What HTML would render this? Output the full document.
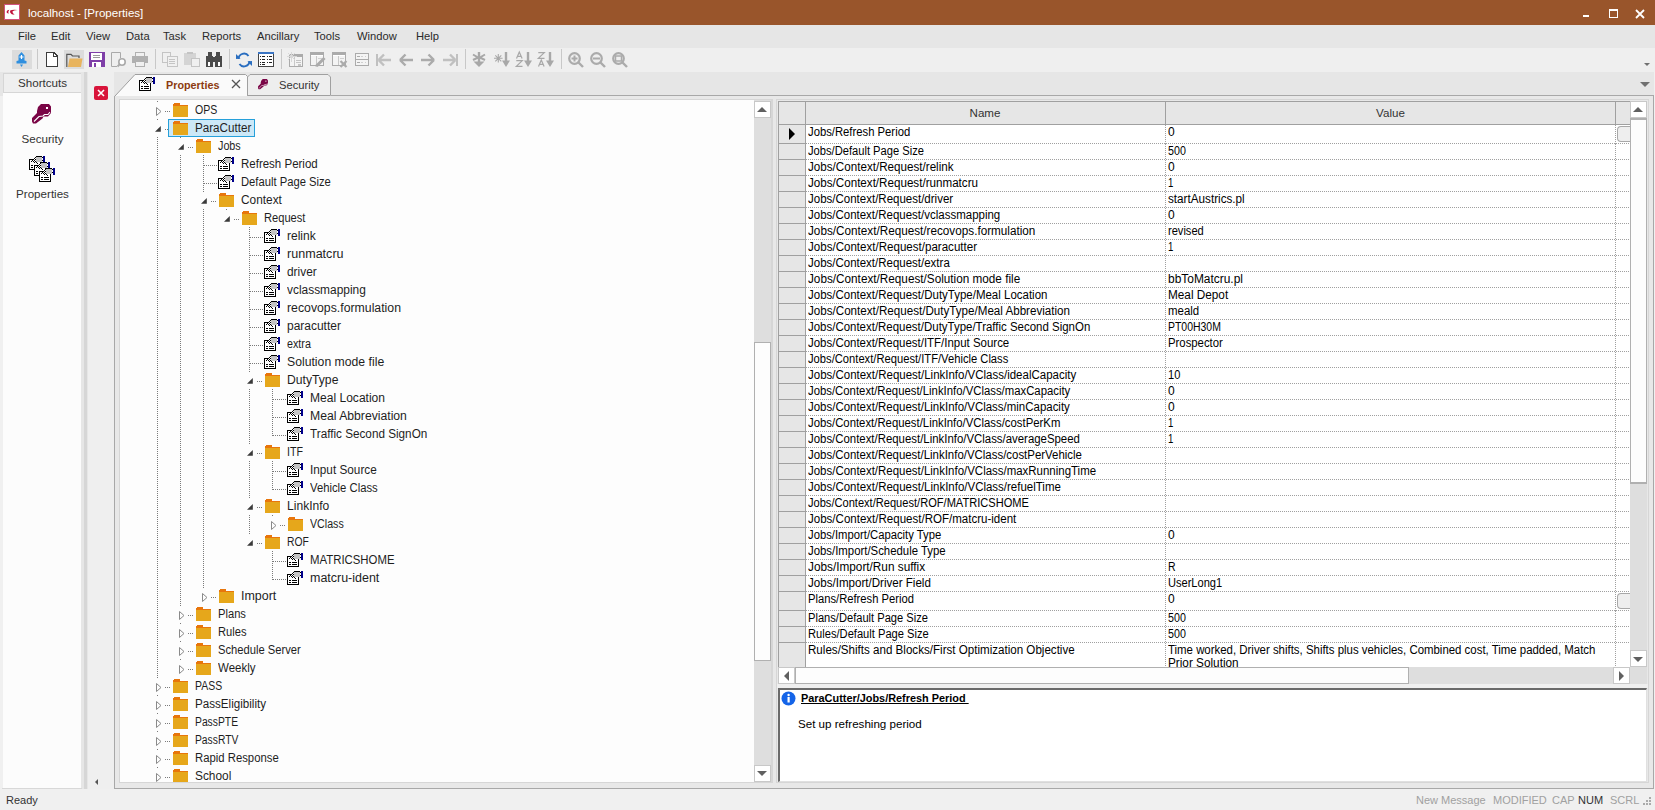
<!DOCTYPE html>
<html><head><meta charset="utf-8"><style>
html,body{margin:0;padding:0;width:1655px;height:810px;overflow:hidden;background:#f0f0f0;font-family:"Liberation Sans", sans-serif;}
</style></head><body>
<svg width="0" height="0" style="position:absolute"><defs><pattern id="ck" width="2" height="2" patternUnits="userSpaceOnUse"><rect width="2" height="2" fill="#fff"/><rect width="1" height="1" fill="#000"/><rect x="1" y="1" width="1" height="1" fill="#000"/></pattern></defs></svg>
<div style="position:absolute;left:0px;top:0px;width:1655px;height:25px;background:#99552b"></div>
<div style="position:absolute;left:4px;top:4px;width:16px;height:16px;background:#fff;border:1px solid #d2517c;box-sizing:border-box"></div>
<svg style="position:absolute;left:0px;top:0px;" width="22" height="22" viewBox="0 0 22 22"><path d="M9.3 9.8 Q6.6 10.3 6.5 12 Q6.8 13.6 8.8 13.4 Q7.6 12 9.3 9.8Z" fill="#c0103a"/><path d="M10.2 10.6 Q12.5 9.2 17.5 10 Q13.4 10.3 12.4 11.6 Q12.3 13 14.6 14.8 Q11.2 14.6 10.3 12.8 Q9.9 11.4 10.2 10.6Z" fill="#c0103a"/></svg>
<div style="position:absolute;left:28px;top:5px;height:16px;line-height:16px;white-space:nowrap;color:#fff;font-size:11.6px">localhost - [Properties]</div>
<div style="position:absolute;left:1583px;top:15px;width:6px;height:2px;background:#fff"></div>
<div style="position:absolute;left:1609px;top:9px;width:9px;height:9px;border:1px solid #fff;border-top-width:2px;box-sizing:border-box"></div>
<svg style="position:absolute;left:1635px;top:9px;" width="10" height="10" viewBox="0 0 10 10"><path d="M1 1L9 9M9 1L1 9" stroke="#fff" stroke-width="1.8"/></svg>
<div style="position:absolute;left:0px;top:25px;width:1655px;height:23px;background:#e6e6e6"></div>
<div style="position:absolute;left:18px;top:28px;height:16px;line-height:16px;white-space:nowrap;color:#2a2a2a;font-size:11.2px">File</div>
<div style="position:absolute;left:51px;top:28px;height:16px;line-height:16px;white-space:nowrap;color:#2a2a2a;font-size:11.2px">Edit</div>
<div style="position:absolute;left:86px;top:28px;height:16px;line-height:16px;white-space:nowrap;color:#2a2a2a;font-size:11.2px">View</div>
<div style="position:absolute;left:126px;top:28px;height:16px;line-height:16px;white-space:nowrap;color:#2a2a2a;font-size:11.2px">Data</div>
<div style="position:absolute;left:163px;top:28px;height:16px;line-height:16px;white-space:nowrap;color:#2a2a2a;font-size:11.2px">Task</div>
<div style="position:absolute;left:202px;top:28px;height:16px;line-height:16px;white-space:nowrap;color:#2a2a2a;font-size:11.2px">Reports</div>
<div style="position:absolute;left:257px;top:28px;height:16px;line-height:16px;white-space:nowrap;color:#2a2a2a;font-size:11.2px">Ancillary</div>
<div style="position:absolute;left:314px;top:28px;height:16px;line-height:16px;white-space:nowrap;color:#2a2a2a;font-size:11.2px">Tools</div>
<div style="position:absolute;left:357px;top:28px;height:16px;line-height:16px;white-space:nowrap;color:#2a2a2a;font-size:11.2px">Window</div>
<div style="position:absolute;left:416px;top:28px;height:16px;line-height:16px;white-space:nowrap;color:#2a2a2a;font-size:11.2px">Help</div>
<div style="position:absolute;left:0px;top:48px;width:1655px;height:24px;background:#efefef"></div>
<div style="position:absolute;left:1644px;top:63px;width:0px;height:0px;border-left:3px solid transparent;border-right:3px solid transparent;border-top:3px solid #707070"></div>
<div style="position:absolute;left:12px;top:50px;width:20px;height:19px;background:#dcdcdc"></div>
<div style="position:absolute;left:64px;top:50px;width:20px;height:19px;background:#dcdcdc"></div>
<div style="position:absolute;left:37px;top:49px;width:1px;height:20px;background:#c8c8c8"></div>
<div style="position:absolute;left:155px;top:49px;width:1px;height:20px;background:#c8c8c8"></div>
<div style="position:absolute;left:229px;top:49px;width:1px;height:20px;background:#c8c8c8"></div>
<div style="position:absolute;left:281px;top:49px;width:1px;height:20px;background:#c8c8c8"></div>
<div style="position:absolute;left:465px;top:49px;width:1px;height:20px;background:#c8c8c8"></div>
<div style="position:absolute;left:561px;top:49px;width:1px;height:20px;background:#c8c8c8"></div>
<svg style="position:absolute;left:14px;top:51px;" width="16" height="17" viewBox="0 0 16 17"><path d="M7.5 1 L10.5 4.5 L10.5 9.5 L12.5 10 L12.5 12.5 L2.5 12.5 L2.5 10 L4.5 9.5 L4.5 4.5 Z" fill="#2f8fdf"/><path d="M6 13.5 L9 13.5 L7.5 16 Z" fill="#2f8fdf"/><path d="M7.5 4 L7.5 8 M5.5 6 L9.5 6" stroke="#fff" stroke-width="1.2"/></svg>
<svg style="position:absolute;left:46px;top:52px;" width="12" height="16" viewBox="0 0 12 16" shape-rendering="crispEdges"><path d="M0.5 0.5 L8 0.5 L11.5 4 L11.5 14.5 L0.5 14.5 Z" fill="#fff" stroke="#3c3c3c"/><path d="M7.5 0.5 L7.5 4.5 L11.5 4.5" fill="none" stroke="#3c3c3c"/></svg>
<svg style="position:absolute;left:66px;top:53px;" width="18" height="15" viewBox="0 0 18 15"><path d="M0.8 14 L0.8 1.3 L5 1.3 L6.5 3 L13 3 L13 5" fill="none" stroke="#555" stroke-width="1.2"/><path d="M2 14 L3.5 5.5 L16.5 5.5 L15 14 Z" fill="#e8b45e"/></svg>
<svg style="position:absolute;left:89px;top:52px;" width="16" height="16" viewBox="0 0 16 16" shape-rendering="crispEdges"><rect x="0" y="0" width="16" height="15" fill="#7f3fa8"/><rect x="2" y="1" width="11" height="7" fill="#fff"/><rect x="4" y="3" width="7" height="1" fill="#999"/><rect x="4" y="5" width="7" height="1" fill="#999"/><rect x="3" y="10" width="9" height="5" fill="#fff"/><rect x="5" y="11" width="2" height="4" fill="#7f3fa8"/></svg>
<svg style="position:absolute;left:111px;top:52px;" width="16" height="16" viewBox="0 0 16 16"><path d="M0.5 14.5 L0.5 0.5 L9.5 0.5 L9.5 6" fill="none" stroke="#aaa" stroke-width="1"/><path d="M0.5 14.5 L6 14.5" stroke="#aaa"/><circle cx="11" cy="10" r="3.2" fill="#fff" stroke="#aaa" stroke-width="1.6"/><path d="M8.5 12.5 L6.5 14.5" stroke="#aaa" stroke-width="1.8"/></svg>
<svg style="position:absolute;left:132px;top:52px;" width="16" height="16" viewBox="0 0 16 16" shape-rendering="crispEdges"><rect x="3" y="0" width="10" height="4" fill="#b0b0b0"/><rect x="4" y="1" width="8" height="3" fill="#f0f0f0"/><rect x="0" y="4" width="16" height="7" fill="#b0b0b0"/><rect x="3" y="9" width="10" height="6" fill="#b0b0b0"/><rect x="4" y="10" width="8" height="4" fill="#f0f0f0"/></svg>
<svg style="position:absolute;left:162px;top:52px;" width="16" height="16" viewBox="0 0 16 16" shape-rendering="crispEdges"><rect x="0.5" y="0.5" width="8" height="10" fill="#f0f0f0" stroke="#c4c4c4"/><rect x="5.5" y="4.5" width="10" height="10" fill="#f0f0f0" stroke="#c4c4c4"/><rect x="7" y="7" width="6" height="1" fill="#c4c4c4"/><rect x="7" y="9" width="6" height="1" fill="#c4c4c4"/><rect x="7" y="11" width="6" height="1" fill="#c4c4c4"/></svg>
<svg style="position:absolute;left:184px;top:52px;" width="16" height="16" viewBox="0 0 16 16" shape-rendering="crispEdges"><rect x="0" y="1" width="12" height="12" fill="#d4d4d4"/><rect x="3" y="0" width="6" height="2" fill="#c4c4c4"/><rect x="7.5" y="6.5" width="8" height="8" fill="#f0f0f0" stroke="#c4c4c4"/></svg>
<svg style="position:absolute;left:206px;top:52px;" width="16" height="16" viewBox="0 0 16 16" shape-rendering="crispEdges"><rect x="2" y="0" width="4" height="4" fill="#4a4a4a"/><rect x="10" y="0" width="4" height="4" fill="#4a4a4a"/><rect x="0" y="4" width="7" height="11" fill="#4a4a4a"/><rect x="9" y="4" width="7" height="11" fill="#4a4a4a"/><rect x="6" y="5" width="4" height="5" fill="#4a4a4a"/><rect x="2" y="10" width="2" height="4" fill="#fff"/><rect x="12" y="10" width="2" height="4" fill="#fff"/></svg>
<svg style="position:absolute;left:236px;top:52px;" width="16" height="16" viewBox="0 0 16 16"><path d="M2.5 7 A5.5 5.5 0 0 1 12.5 4" fill="none" stroke="#2a6ec0" stroke-width="2"/><path d="M13.5 9 A5.5 5.5 0 0 1 3.5 12" fill="none" stroke="#2a6ec0" stroke-width="2"/><path d="M0 2 L4.5 6.5 L0 7Z" fill="#2a6ec0"/><path d="M16 14 L11.5 9.5 L16 9Z" fill="#2a6ec0"/></svg>
<svg style="position:absolute;left:258px;top:52px;" width="16" height="16" viewBox="0 0 16 16" shape-rendering="crispEdges"><rect x="0.5" y="0.5" width="15" height="14" fill="#fff" stroke="#444"/><rect x="0" y="0" width="16" height="2" fill="#3a75c4"/><rect x="2" y="4" width="1" height="1" fill="#222"/><rect x="4" y="4" width="3" height="1" fill="#222"/><rect x="9" y="4" width="1" height="1" fill="#222"/><rect x="11" y="4" width="3" height="1" fill="#222"/><rect x="2" y="7" width="1" height="1" fill="#222"/><rect x="4" y="7" width="3" height="1" fill="#222"/><rect x="9" y="7" width="1" height="1" fill="#222"/><rect x="11" y="7" width="3" height="1" fill="#222"/><rect x="2" y="10" width="1" height="1" fill="#222"/><rect x="4" y="10" width="3" height="1" fill="#222"/><rect x="9" y="10" width="1" height="1" fill="#222"/><rect x="11" y="10" width="3" height="1" fill="#222"/><rect x="2" y="12" width="1" height="1" fill="#222"/><rect x="4" y="12" width="3" height="1" fill="#222"/></svg>
<svg style="position:absolute;left:283px;top:48px;" width="90" height="24" viewBox="0 0 90 24" shape-rendering="crispEdges"><rect x="6.5" y="6.5" width="13" height="12" fill="#f4f4f4" stroke="#ababab"/><rect x="6" y="6" width="14" height="3" fill="#ababab"/><rect x="11" y="9" width="1" height="9" fill="#c8c8c8"/><rect x="13" y="12" width="5" height="1" fill="#c4c4c4"/><rect x="13" y="14" width="5" height="1" fill="#c4c4c4"/><rect x="15" y="16" width="3" height="2" fill="#c4c4c4"/><circle cx="8.5" cy="8.5" r="2" fill="#d4d4d4"/><path d="M8.5 3.5 L8.5 13.5 M3.5 8.5 L13.5 8.5 M5 5 L12 12 M12 5 L5 12" stroke="#d8d8d8" stroke-width="1"/><rect x="27.5" y="4.5" width="13" height="13" fill="#f4f4f4" stroke="#ababab"/><rect x="27" y="4" width="14" height="3" fill="#ababab"/><rect x="28" y="7" width="12" height="1" fill="#fff"/><rect x="33" y="8" width="1" height="9" fill="#c8c8c8"/><rect x="35" y="10" width="4" height="1" fill="#d0d0d0"/><rect x="49.5" y="4.5" width="13" height="13" fill="#f4f4f4" stroke="#ababab"/><rect x="49" y="4" width="14" height="3" fill="#ababab"/><rect x="50" y="7" width="12" height="1" fill="#fff"/><rect x="55" y="8" width="1" height="9" fill="#c8c8c8"/><rect x="57" y="10" width="4" height="1" fill="#d0d0d0"/><rect x="72.5" y="5.5" width="13" height="12" fill="#f4f4f4" stroke="#ababab"/><rect x="72" y="11" width="14" height="1" fill="#ababab"/><rect x="74" y="8" width="3" height="1" fill="#ababab"/><rect x="78" y="8" width="2" height="1" fill="#d0d0d0"/><rect x="82" y="8" width="1" height="1" fill="#d0d0d0"/><rect x="74" y="14" width="3" height="1" fill="#ababab"/><rect x="78" y="14" width="2" height="1" fill="#d0d0d0"/><rect x="82" y="14" width="1" height="1" fill="#d0d0d0"/></svg>
<svg style="position:absolute;left:283px;top:48px;" width="90" height="24" viewBox="0 0 90 24"><path d="M33.5 18 L41.5 10" stroke="#ababab" stroke-width="3"/><path d="M32.5 19 L33 17.5 L34 18.5Z" fill="#ababab"/><path d="M57.5 13 L63.5 19 M63.5 13 L57.5 19" stroke="#ababab" stroke-width="2.2"/></svg>
<svg style="position:absolute;left:376px;top:53px;" width="16" height="14" viewBox="0 0 16 14"><rect x="0" y="1" width="2" height="12" fill="#c0c0c0"/><path d="M2.5 7 L8 1.5 M2.5 7 L8 12.5 M3 7 L15 7" stroke="#c0c0c0" stroke-width="2.4"/></svg>
<svg style="position:absolute;left:399px;top:53px;" width="15" height="14" viewBox="0 0 15 14"><path d="M1 7 L6.5 1.5 M1 7 L6.5 12.5 M1.5 7 L14 7" stroke="#ababab" stroke-width="2.4"/></svg>
<svg style="position:absolute;left:420px;top:53px;" width="15" height="14" viewBox="0 0 15 14"><path d="M14 7 L8.5 1.5 M14 7 L8.5 12.5 M13.5 7 L1 7" stroke="#ababab" stroke-width="2.4"/></svg>
<svg style="position:absolute;left:442px;top:53px;" width="16" height="14" viewBox="0 0 16 14"><rect x="14" y="1" width="2" height="12" fill="#c0c0c0"/><path d="M13.5 7 L8 1.5 M13.5 7 L8 12.5 M13 7 L1 7" stroke="#c0c0c0" stroke-width="2.4"/></svg>
<svg style="position:absolute;left:465px;top:48px;" width="95" height="24" viewBox="0 0 95 24"><path d="M14 4 L14 14" stroke="#a8a8a8" stroke-width="2.4"/><path d="M8 6.5 L14 10 L20 6.5 M8 12 L14 9 L20 12" stroke="#a8a8a8" stroke-width="2" fill="none"/><path d="M8.5 13.5 L19.5 13.5 L14 19 Z" fill="#a8a8a8"/><path d="M33.3 6 L33.3 14.6 M29 10.3 L37.6 10.3 M30.3 7.3 L36.3 13.3 M36.3 7.3 L30.3 13.3" stroke="#a8a8a8" stroke-width="1.1"/><path d="M41 4 L41 15" stroke="#a8a8a8" stroke-width="2.4"/><path d="M37 12.5 L45 12.5 L41 19 Z" fill="#a8a8a8"/><path d="M51.5 10.5 L54.3 4 L57.1 10.5 M52.5 8.3 L56.1 8.3" stroke="#a8a8a8" stroke-width="1.2" fill="none"/><path d="M51.3 12.6 L57.3 12.6 L51.3 18.4 L57.5 18.4" stroke="#a8a8a8" stroke-width="1.2" fill="none"/><path d="M63 4 L63 15" stroke="#a8a8a8" stroke-width="2.4"/><path d="M59 12.5 L67 12.5 L63 19 Z" fill="#a8a8a8"/><path d="M73.3 4.6 L79.3 4.6 L73.3 10.4 L79.5 10.4" stroke="#a8a8a8" stroke-width="1.2" fill="none"/><path d="M73.5 18.5 L76.3 12 L79.1 18.5 M74.5 16.3 L78.1 16.3" stroke="#a8a8a8" stroke-width="1.2" fill="none"/><path d="M85 4 L85 15" stroke="#a8a8a8" stroke-width="2.4"/><path d="M81 12.5 L89 12.5 L85 19 Z" fill="#a8a8a8"/></svg>
<svg style="position:absolute;left:568px;top:52px;" width="16" height="16" viewBox="0 0 16 16"><circle cx="6.5" cy="6.5" r="5.3" fill="none" stroke="#ababab" stroke-width="2.2"/><path d="M10.5 10.5 L15 15" stroke="#ababab" stroke-width="2.4"/><path d="M3.5 6.5 L9.5 6.5 M6.5 3.5 L6.5 9.5" stroke="#ababab" stroke-width="2"/></svg>
<svg style="position:absolute;left:590px;top:52px;" width="16" height="16" viewBox="0 0 16 16"><circle cx="6.5" cy="6.5" r="5.3" fill="none" stroke="#ababab" stroke-width="2.2"/><path d="M10.5 10.5 L15 15" stroke="#ababab" stroke-width="2.4"/><path d="M3 6.5 L10 6.5" stroke="#ababab" stroke-width="2"/></svg>
<svg style="position:absolute;left:612px;top:52px;" width="16" height="16" viewBox="0 0 16 16"><circle cx="6.5" cy="6.5" r="5.3" fill="none" stroke="#ababab" stroke-width="2.2"/><path d="M10.5 10.5 L15 15" stroke="#ababab" stroke-width="2.4"/><rect x="3.5" y="4" width="6" height="5" fill="none" stroke="#ababab" stroke-width="1.5"/></svg>
<div style="position:absolute;left:0px;top:72px;width:1655px;height:24px;background:#e6e6e6"></div>
<div style="position:absolute;left:1640px;top:82px;width:0px;height:0px;border-left:5px solid transparent;border-right:5px solid transparent;border-top:5px solid #707070"></div>
<div style="position:absolute;left:3px;top:73px;width:79px;height:716px;background:#fcfcfc"></div>
<div style="position:absolute;left:3px;top:73px;width:79px;height:20px;background:#efefef;border:1px solid #d6d6d6;box-sizing:border-box"></div>
<div style="position:absolute;left:3px;top:75px;height:16px;line-height:16px;white-space:nowrap;color:#333;font-size:11.6px;width:79px;text-align:center">Shortcuts</div>
<div style="position:absolute;left:81px;top:72px;width:7px;height:717px;background:#e6e6e6"></div>
<div style="position:absolute;left:84px;top:72px;width:3px;height:717px;background:#d6d6d6"></div>
<div style="position:absolute;left:88px;top:72px;width:26px;height:717px;background:#efefef"></div>
<div style="position:absolute;left:94px;top:86px;width:14px;height:14px;background:#d8143a;border-radius:2px"></div>
<svg style="position:absolute;left:94px;top:86px;" width="14" height="14" viewBox="0 0 14 14"><path d="M4 4L10 10M10 4L4 10" stroke="#fff" stroke-width="1.6"/></svg>
<div style="position:absolute;left:95px;top:779px;width:0px;height:0px;border-top:3px solid transparent;border-bottom:3px solid transparent;border-right:3px solid #555"></div>
<div style="position:absolute;left:2px;top:788px;width:80px;height:1px;background:#d8d8d8"></div>
<svg style="position:absolute;left:28px;top:100px;" width="28" height="28" viewBox="0 0 28 28"><path d="M13 4 L21 4 L23 6.5 L23 13 L20 16.5 L15.5 16.5 L14.5 18.5 L8 23.5 L5 23.5 L4 21.5 L4 18 L9 13 L9 11 L10 7 Z" fill="#7a0546"/><path d="M6 21.5 L11 16.5 L15 16 L16.5 14.5 L20 14.5 L22 12" stroke="#fff" stroke-width="1.1" fill="none"/><rect x="18" y="7" width="2" height="2" fill="#fff"/></svg>
<div style="position:absolute;left:3px;top:131px;height:16px;line-height:16px;white-space:nowrap;color:#333;font-size:11.6px;width:79px;text-align:center">Security</div>
<svg style="position:absolute;left:29px;top:155px;" width="17" height="16" viewBox="0 0 17 16" shape-rendering="crispEdges"><rect x="0.5" y="4.5" width="11" height="10" fill="#fff" stroke="#000"/><rect x="2" y="10" width="2" height="1" fill="#000"/><rect x="5" y="10" width="5" height="1" fill="#000"/><rect x="2" y="12" width="2" height="1" fill="#000"/><rect x="5" y="12" width="5" height="1" fill="#000"/><path d="M2 6.5 L6.5 2 L11 5 L8.5 8.6 Z" fill="url(#ck)"/><rect x="7" y="2" width="6" height="5" fill="#c4c4c4"/><rect x="7" y="1" width="6" height="1" fill="#000"/><rect x="13" y="2" width="1" height="1" fill="#000"/><rect x="13" y="5" width="1" height="1" fill="#000"/><rect x="14" y="1" width="2" height="7" fill="#00008b"/></svg>
<svg style="position:absolute;left:34px;top:161px;" width="17" height="16" viewBox="0 0 17 16" shape-rendering="crispEdges"><rect x="0.5" y="4.5" width="11" height="10" fill="#fff" stroke="#000"/><rect x="2" y="10" width="2" height="1" fill="#000"/><rect x="5" y="10" width="5" height="1" fill="#000"/><rect x="2" y="12" width="2" height="1" fill="#000"/><rect x="5" y="12" width="5" height="1" fill="#000"/><path d="M2 6.5 L6.5 2 L11 5 L8.5 8.6 Z" fill="url(#ck)"/><rect x="7" y="2" width="6" height="5" fill="#c4c4c4"/><rect x="7" y="1" width="6" height="1" fill="#000"/><rect x="13" y="2" width="1" height="1" fill="#000"/><rect x="13" y="5" width="1" height="1" fill="#000"/><rect x="14" y="1" width="2" height="7" fill="#00008b"/></svg>
<svg style="position:absolute;left:39px;top:167px;" width="17" height="16" viewBox="0 0 17 16" shape-rendering="crispEdges"><rect x="0.5" y="4.5" width="11" height="10" fill="#fff" stroke="#000"/><rect x="2" y="10" width="2" height="1" fill="#000"/><rect x="5" y="10" width="5" height="1" fill="#000"/><rect x="2" y="12" width="2" height="1" fill="#000"/><rect x="5" y="12" width="5" height="1" fill="#000"/><path d="M2 6.5 L6.5 2 L11 5 L8.5 8.6 Z" fill="url(#ck)"/><rect x="7" y="2" width="6" height="5" fill="#c4c4c4"/><rect x="7" y="1" width="6" height="1" fill="#000"/><rect x="13" y="2" width="1" height="1" fill="#000"/><rect x="13" y="5" width="1" height="1" fill="#000"/><rect x="14" y="1" width="2" height="7" fill="#00008b"/></svg>
<div style="position:absolute;left:3px;top:186px;height:16px;line-height:16px;white-space:nowrap;color:#333;font-size:11.6px;width:79px;text-align:center">Properties</div>
<div style="position:absolute;left:114px;top:96px;width:1541px;height:693px;background:#e8e8e8;border-left:1px solid #a8a8a8;border-bottom:1px solid #a8a8a8;box-sizing:border-box"></div>
<div style="position:absolute;left:1653px;top:95px;width:1px;height:694px;background:#a8a8a8"></div>
<div style="position:absolute;left:1654px;top:72px;width:1px;height:717px;background:#f0f0f0"></div>
<svg style="position:absolute;left:114px;top:74px;" width="135" height="23" viewBox="0 0 135 23"><path d="M1 22 L21 0.5 L131.5 0.5 L133.5 2.5 L133.5 23" fill="#fafafa" stroke="#a0a0a0" stroke-width="1"/></svg>
<svg style="position:absolute;left:247px;top:74px;" width="85" height="22" viewBox="0 0 85 22"><path d="M0.5 21.5 L0.5 3 L3 0.5 L81 0.5 L83.5 3 L83.5 21.5 Z" fill="#eeeeee" stroke="#a0a0a0" stroke-width="1"/></svg>
<svg style="position:absolute;left:139px;top:76px;" width="17" height="16" viewBox="0 0 17 16" shape-rendering="crispEdges"><rect x="0.5" y="4.5" width="11" height="10" fill="#fff" stroke="#000"/><rect x="2" y="10" width="2" height="1" fill="#000"/><rect x="5" y="10" width="5" height="1" fill="#000"/><rect x="2" y="12" width="2" height="1" fill="#000"/><rect x="5" y="12" width="5" height="1" fill="#000"/><path d="M2 6.5 L6.5 2 L11 5 L8.5 8.6 Z" fill="url(#ck)"/><rect x="7" y="2" width="6" height="5" fill="#c4c4c4"/><rect x="7" y="1" width="6" height="1" fill="#000"/><rect x="13" y="2" width="1" height="1" fill="#000"/><rect x="13" y="5" width="1" height="1" fill="#000"/><rect x="14" y="1" width="2" height="7" fill="#00008b"/></svg>
<div style="position:absolute;left:166px;top:77px;height:16px;line-height:16px;white-space:nowrap;color:#8c3b10;font-weight:bold;font-size:10.8px">Properties</div>
<svg style="position:absolute;left:231px;top:79px;" width="10" height="10" viewBox="0 0 10 10"><path d="M1 1L9 9M9 1L1 9" stroke="#555" stroke-width="1.3"/></svg>
<svg style="position:absolute;left:256px;top:77px;" width="14" height="14" viewBox="0 0 14 14"><g transform="scale(0.52)"><path d="M13 4 L21 4 L23 6.5 L23 13 L20 16.5 L15.5 16.5 L14.5 18.5 L8 23.5 L5 23.5 L4 21.5 L4 18 L9 13 L9 11 L10 7 Z" fill="#7a0546"/><path d="M6 21.5 L11 16.5 L15 16 L16.5 14.5 L20 14.5 L22 12" stroke="#fff" stroke-width="1.1" fill="none"/><rect x="18" y="7" width="2" height="2" fill="#fff"/></g></svg>
<div style="position:absolute;left:279px;top:77px;height:16px;line-height:16px;white-space:nowrap;color:#333;font-size:11.2px">Security</div>
<div style="position:absolute;left:331px;top:95px;width:1323px;height:1px;background:#a8a8a8"></div>
<div style="position:absolute;left:115px;top:96px;width:1538px;height:3px;background:#e8e8e8"></div>
<div style="position:absolute;left:119px;top:99px;width:654px;height:684px;background:#d6d6d6"></div>
<div style="position:absolute;left:120px;top:100px;width:634px;height:682px;background:#fdfdfd"></div>
<div style="position:absolute;left:754px;top:100px;width:17px;height:682px;background:#dedede"></div>
<div style="position:absolute;left:754px;top:101px;width:17px;height:17px;background:#fff;border:1px solid #c8c8c8;box-sizing:border-box"></div>
<div style="position:absolute;left:757px;top:107px;width:0px;height:0px;border-left:5px solid transparent;border-right:5px solid transparent;border-bottom:5px solid #606060"></div>
<div style="position:absolute;left:754px;top:342px;width:17px;height:319px;background:#fdfdfd;border:1px solid #b0b0b0;box-sizing:border-box"></div>
<div style="position:absolute;left:754px;top:765px;width:17px;height:17px;background:#fff;border:1px solid #c8c8c8;box-sizing:border-box"></div>
<div style="position:absolute;left:757px;top:771px;width:0px;height:0px;border-left:5px solid transparent;border-right:5px solid transparent;border-top:5px solid #606060"></div>
<div style="position:absolute;left:120px;top:100px;width:634px;height:682px;overflow:hidden">
<div style="position:absolute;left:37px;top:1px;width:1px;height:700px;background:repeating-linear-gradient(to bottom,#7a7a7a 0 1px,transparent 1px 2px)"></div>
<div style="position:absolute;left:60px;top:37px;width:1px;height:533px;background:repeating-linear-gradient(to bottom,#7a7a7a 0 1px,transparent 1px 2px)"></div>
<div style="position:absolute;left:83px;top:55px;width:1px;height:443px;background:repeating-linear-gradient(to bottom,#7a7a7a 0 1px,transparent 1px 2px)"></div>
<div style="position:absolute;left:106px;top:109px;width:1px;height:11px;background:repeating-linear-gradient(to bottom,#7a7a7a 0 1px,transparent 1px 2px)"></div>
<div style="position:absolute;left:129px;top:127px;width:1px;height:317px;background:repeating-linear-gradient(to bottom,#7a7a7a 0 1px,transparent 1px 2px)"></div>
<div style="position:absolute;left:152px;top:289px;width:1px;height:47px;background:repeating-linear-gradient(to bottom,#7a7a7a 0 1px,transparent 1px 2px)"></div>
<div style="position:absolute;left:152px;top:361px;width:1px;height:29px;background:repeating-linear-gradient(to bottom,#7a7a7a 0 1px,transparent 1px 2px)"></div>
<div style="position:absolute;left:152px;top:415px;width:1px;height:11px;background:repeating-linear-gradient(to bottom,#7a7a7a 0 1px,transparent 1px 2px)"></div>
<div style="position:absolute;left:152px;top:451px;width:1px;height:29px;background:repeating-linear-gradient(to bottom,#7a7a7a 0 1px,transparent 1px 2px)"></div>
<div style="position:absolute;left:45px;top:11px;width:6px;height:1px;background:repeating-linear-gradient(to right,#7a7a7a 0 1px,transparent 1px 2px)"></div>
<div style="position:absolute;left:34px;top:3px;width:8px;height:15px;background:#fdfdfd"></div>
<svg style="position:absolute;left:36px;top:7px;" width="6" height="9" viewBox="0 0 6 9"><path d="M0.5 0.5 L5 4.5 L0.5 8.5 Z" fill="none" stroke="#8a8a8a" stroke-width="1"/></svg>
<svg style="position:absolute;left:53px;top:3px;" width="15" height="14" viewBox="0 0 15 14" shape-rendering="crispEdges"><path d="M0 1 L1 0 L6 0 L7 1 L7 2 L15 2 L15 14 L0 14 Z" fill="#e8760c"/><rect x="0" y="3" width="15" height="11" fill="#e6a71b"/></svg>
<div style="position:absolute;left:75px;top:2px;height:16px;line-height:16px;white-space:nowrap;color:#1e1e1e;font-size:12px;transform:scaleX(0.88);transform-origin:0 0">OPS</div>
<div style="position:absolute;left:45px;top:29px;width:6px;height:1px;background:repeating-linear-gradient(to right,#7a7a7a 0 1px,transparent 1px 2px)"></div>
<div style="position:absolute;left:34px;top:21px;width:8px;height:15px;background:#fdfdfd"></div>
<svg style="position:absolute;left:35px;top:26px;" width="6" height="6" viewBox="0 0 6 6"><path d="M0 5.8 L5.8 0 L5.8 5.8 Z" fill="#3a3a3a"/></svg>
<div style="position:absolute;left:48px;top:19px;width:87px;height:18px;background:#cce8f7;border:1px solid #26a0da;box-sizing:border-box"></div>
<svg style="position:absolute;left:53px;top:21px;" width="15" height="14" viewBox="0 0 15 14" shape-rendering="crispEdges"><path d="M0 1 L1 0 L6 0 L7 1 L7 2 L15 2 L15 14 L0 14 Z" fill="#e8760c"/><rect x="0" y="3" width="15" height="11" fill="#e6a71b"/></svg>
<div style="position:absolute;left:75px;top:20px;height:16px;line-height:16px;white-space:nowrap;color:#1e1e1e;font-size:12px;transform:scaleX(0.9703);transform-origin:0 0">ParaCutter</div>
<div style="position:absolute;left:68px;top:47px;width:6px;height:1px;background:repeating-linear-gradient(to right,#7a7a7a 0 1px,transparent 1px 2px)"></div>
<div style="position:absolute;left:57px;top:39px;width:8px;height:15px;background:#fdfdfd"></div>
<svg style="position:absolute;left:58px;top:44px;" width="6" height="6" viewBox="0 0 6 6"><path d="M0 5.8 L5.8 0 L5.8 5.8 Z" fill="#3a3a3a"/></svg>
<svg style="position:absolute;left:76px;top:39px;" width="15" height="14" viewBox="0 0 15 14" shape-rendering="crispEdges"><path d="M0 1 L1 0 L6 0 L7 1 L7 2 L15 2 L15 14 L0 14 Z" fill="#e8760c"/><rect x="0" y="3" width="15" height="11" fill="#e6a71b"/></svg>
<div style="position:absolute;left:98px;top:38px;height:16px;line-height:16px;white-space:nowrap;color:#1e1e1e;font-size:12px;transform:scaleX(0.896);transform-origin:0 0">Jobs</div>
<div style="position:absolute;left:84px;top:65px;width:14px;height:1px;background:repeating-linear-gradient(to right,#7a7a7a 0 1px,transparent 1px 2px)"></div>
<svg style="position:absolute;left:98px;top:56px;" width="17" height="16" viewBox="0 0 17 16" shape-rendering="crispEdges"><rect x="0.5" y="4.5" width="11" height="10" fill="#fff" stroke="#000"/><rect x="2" y="10" width="2" height="1" fill="#000"/><rect x="5" y="10" width="5" height="1" fill="#000"/><rect x="2" y="12" width="2" height="1" fill="#000"/><rect x="5" y="12" width="5" height="1" fill="#000"/><path d="M2 6.5 L6.5 2 L11 5 L8.5 8.6 Z" fill="url(#ck)"/><rect x="7" y="2" width="6" height="5" fill="#c4c4c4"/><rect x="7" y="1" width="6" height="1" fill="#000"/><rect x="13" y="2" width="1" height="1" fill="#000"/><rect x="13" y="5" width="1" height="1" fill="#000"/><rect x="14" y="1" width="2" height="7" fill="#00008b"/></svg>
<div style="position:absolute;left:121px;top:56px;height:16px;line-height:16px;white-space:nowrap;color:#1e1e1e;font-size:12px;transform:scaleX(0.9582);transform-origin:0 0">Refresh Period</div>
<div style="position:absolute;left:84px;top:83px;width:14px;height:1px;background:repeating-linear-gradient(to right,#7a7a7a 0 1px,transparent 1px 2px)"></div>
<svg style="position:absolute;left:98px;top:74px;" width="17" height="16" viewBox="0 0 17 16" shape-rendering="crispEdges"><rect x="0.5" y="4.5" width="11" height="10" fill="#fff" stroke="#000"/><rect x="2" y="10" width="2" height="1" fill="#000"/><rect x="5" y="10" width="5" height="1" fill="#000"/><rect x="2" y="12" width="2" height="1" fill="#000"/><rect x="5" y="12" width="5" height="1" fill="#000"/><path d="M2 6.5 L6.5 2 L11 5 L8.5 8.6 Z" fill="url(#ck)"/><rect x="7" y="2" width="6" height="5" fill="#c4c4c4"/><rect x="7" y="1" width="6" height="1" fill="#000"/><rect x="13" y="2" width="1" height="1" fill="#000"/><rect x="13" y="5" width="1" height="1" fill="#000"/><rect x="14" y="1" width="2" height="7" fill="#00008b"/></svg>
<div style="position:absolute;left:121px;top:74px;height:16px;line-height:16px;white-space:nowrap;color:#1e1e1e;font-size:12px;transform:scaleX(0.9354);transform-origin:0 0">Default Page Size</div>
<div style="position:absolute;left:91px;top:101px;width:6px;height:1px;background:repeating-linear-gradient(to right,#7a7a7a 0 1px,transparent 1px 2px)"></div>
<div style="position:absolute;left:80px;top:93px;width:8px;height:15px;background:#fdfdfd"></div>
<svg style="position:absolute;left:81px;top:98px;" width="6" height="6" viewBox="0 0 6 6"><path d="M0 5.8 L5.8 0 L5.8 5.8 Z" fill="#3a3a3a"/></svg>
<svg style="position:absolute;left:99px;top:93px;" width="15" height="14" viewBox="0 0 15 14" shape-rendering="crispEdges"><path d="M0 1 L1 0 L6 0 L7 1 L7 2 L15 2 L15 14 L0 14 Z" fill="#e8760c"/><rect x="0" y="3" width="15" height="11" fill="#e6a71b"/></svg>
<div style="position:absolute;left:121px;top:92px;height:16px;line-height:16px;white-space:nowrap;color:#1e1e1e;font-size:12px;transform:scaleX(0.9878);transform-origin:0 0">Context</div>
<div style="position:absolute;left:114px;top:119px;width:6px;height:1px;background:repeating-linear-gradient(to right,#7a7a7a 0 1px,transparent 1px 2px)"></div>
<div style="position:absolute;left:103px;top:111px;width:8px;height:15px;background:#fdfdfd"></div>
<svg style="position:absolute;left:104px;top:116px;" width="6" height="6" viewBox="0 0 6 6"><path d="M0 5.8 L5.8 0 L5.8 5.8 Z" fill="#3a3a3a"/></svg>
<svg style="position:absolute;left:122px;top:111px;" width="15" height="14" viewBox="0 0 15 14" shape-rendering="crispEdges"><path d="M0 1 L1 0 L6 0 L7 1 L7 2 L15 2 L15 14 L0 14 Z" fill="#e8760c"/><rect x="0" y="3" width="15" height="11" fill="#e6a71b"/></svg>
<div style="position:absolute;left:144px;top:110px;height:16px;line-height:16px;white-space:nowrap;color:#1e1e1e;font-size:12px;transform:scaleX(0.9267);transform-origin:0 0">Request</div>
<div style="position:absolute;left:130px;top:137px;width:14px;height:1px;background:repeating-linear-gradient(to right,#7a7a7a 0 1px,transparent 1px 2px)"></div>
<svg style="position:absolute;left:144px;top:128px;" width="17" height="16" viewBox="0 0 17 16" shape-rendering="crispEdges"><rect x="0.5" y="4.5" width="11" height="10" fill="#fff" stroke="#000"/><rect x="2" y="10" width="2" height="1" fill="#000"/><rect x="5" y="10" width="5" height="1" fill="#000"/><rect x="2" y="12" width="2" height="1" fill="#000"/><rect x="5" y="12" width="5" height="1" fill="#000"/><path d="M2 6.5 L6.5 2 L11 5 L8.5 8.6 Z" fill="url(#ck)"/><rect x="7" y="2" width="6" height="5" fill="#c4c4c4"/><rect x="7" y="1" width="6" height="1" fill="#000"/><rect x="13" y="2" width="1" height="1" fill="#000"/><rect x="13" y="5" width="1" height="1" fill="#000"/><rect x="14" y="1" width="2" height="7" fill="#00008b"/></svg>
<div style="position:absolute;left:167px;top:128px;height:16px;line-height:16px;white-space:nowrap;color:#1e1e1e;font-size:12px;transform:scaleX(1.0);transform-origin:0 0">relink</div>
<div style="position:absolute;left:130px;top:155px;width:14px;height:1px;background:repeating-linear-gradient(to right,#7a7a7a 0 1px,transparent 1px 2px)"></div>
<svg style="position:absolute;left:144px;top:146px;" width="17" height="16" viewBox="0 0 17 16" shape-rendering="crispEdges"><rect x="0.5" y="4.5" width="11" height="10" fill="#fff" stroke="#000"/><rect x="2" y="10" width="2" height="1" fill="#000"/><rect x="5" y="10" width="5" height="1" fill="#000"/><rect x="2" y="12" width="2" height="1" fill="#000"/><rect x="5" y="12" width="5" height="1" fill="#000"/><path d="M2 6.5 L6.5 2 L11 5 L8.5 8.6 Z" fill="url(#ck)"/><rect x="7" y="2" width="6" height="5" fill="#c4c4c4"/><rect x="7" y="1" width="6" height="1" fill="#000"/><rect x="13" y="2" width="1" height="1" fill="#000"/><rect x="13" y="5" width="1" height="1" fill="#000"/><rect x="14" y="1" width="2" height="7" fill="#00008b"/></svg>
<div style="position:absolute;left:167px;top:146px;height:16px;line-height:16px;white-space:nowrap;color:#1e1e1e;font-size:12px;transform:scaleX(1.0472);transform-origin:0 0">runmatcru</div>
<div style="position:absolute;left:130px;top:173px;width:14px;height:1px;background:repeating-linear-gradient(to right,#7a7a7a 0 1px,transparent 1px 2px)"></div>
<svg style="position:absolute;left:144px;top:164px;" width="17" height="16" viewBox="0 0 17 16" shape-rendering="crispEdges"><rect x="0.5" y="4.5" width="11" height="10" fill="#fff" stroke="#000"/><rect x="2" y="10" width="2" height="1" fill="#000"/><rect x="5" y="10" width="5" height="1" fill="#000"/><rect x="2" y="12" width="2" height="1" fill="#000"/><rect x="5" y="12" width="5" height="1" fill="#000"/><path d="M2 6.5 L6.5 2 L11 5 L8.5 8.6 Z" fill="url(#ck)"/><rect x="7" y="2" width="6" height="5" fill="#c4c4c4"/><rect x="7" y="1" width="6" height="1" fill="#000"/><rect x="13" y="2" width="1" height="1" fill="#000"/><rect x="13" y="5" width="1" height="1" fill="#000"/><rect x="14" y="1" width="2" height="7" fill="#00008b"/></svg>
<div style="position:absolute;left:167px;top:164px;height:16px;line-height:16px;white-space:nowrap;color:#1e1e1e;font-size:12px;transform:scaleX(0.99);transform-origin:0 0">driver</div>
<div style="position:absolute;left:130px;top:191px;width:14px;height:1px;background:repeating-linear-gradient(to right,#7a7a7a 0 1px,transparent 1px 2px)"></div>
<svg style="position:absolute;left:144px;top:182px;" width="17" height="16" viewBox="0 0 17 16" shape-rendering="crispEdges"><rect x="0.5" y="4.5" width="11" height="10" fill="#fff" stroke="#000"/><rect x="2" y="10" width="2" height="1" fill="#000"/><rect x="5" y="10" width="5" height="1" fill="#000"/><rect x="2" y="12" width="2" height="1" fill="#000"/><rect x="5" y="12" width="5" height="1" fill="#000"/><path d="M2 6.5 L6.5 2 L11 5 L8.5 8.6 Z" fill="url(#ck)"/><rect x="7" y="2" width="6" height="5" fill="#c4c4c4"/><rect x="7" y="1" width="6" height="1" fill="#000"/><rect x="13" y="2" width="1" height="1" fill="#000"/><rect x="13" y="5" width="1" height="1" fill="#000"/><rect x="14" y="1" width="2" height="7" fill="#00008b"/></svg>
<div style="position:absolute;left:167px;top:182px;height:16px;line-height:16px;white-space:nowrap;color:#1e1e1e;font-size:12px;transform:scaleX(0.9924);transform-origin:0 0">vclassmapping</div>
<div style="position:absolute;left:130px;top:209px;width:14px;height:1px;background:repeating-linear-gradient(to right,#7a7a7a 0 1px,transparent 1px 2px)"></div>
<svg style="position:absolute;left:144px;top:200px;" width="17" height="16" viewBox="0 0 17 16" shape-rendering="crispEdges"><rect x="0.5" y="4.5" width="11" height="10" fill="#fff" stroke="#000"/><rect x="2" y="10" width="2" height="1" fill="#000"/><rect x="5" y="10" width="5" height="1" fill="#000"/><rect x="2" y="12" width="2" height="1" fill="#000"/><rect x="5" y="12" width="5" height="1" fill="#000"/><path d="M2 6.5 L6.5 2 L11 5 L8.5 8.6 Z" fill="url(#ck)"/><rect x="7" y="2" width="6" height="5" fill="#c4c4c4"/><rect x="7" y="1" width="6" height="1" fill="#000"/><rect x="13" y="2" width="1" height="1" fill="#000"/><rect x="13" y="5" width="1" height="1" fill="#000"/><rect x="14" y="1" width="2" height="7" fill="#00008b"/></svg>
<div style="position:absolute;left:167px;top:200px;height:16px;line-height:16px;white-space:nowrap;color:#1e1e1e;font-size:12px;transform:scaleX(1.0234);transform-origin:0 0">recovops.formulation</div>
<div style="position:absolute;left:130px;top:227px;width:14px;height:1px;background:repeating-linear-gradient(to right,#7a7a7a 0 1px,transparent 1px 2px)"></div>
<svg style="position:absolute;left:144px;top:218px;" width="17" height="16" viewBox="0 0 17 16" shape-rendering="crispEdges"><rect x="0.5" y="4.5" width="11" height="10" fill="#fff" stroke="#000"/><rect x="2" y="10" width="2" height="1" fill="#000"/><rect x="5" y="10" width="5" height="1" fill="#000"/><rect x="2" y="12" width="2" height="1" fill="#000"/><rect x="5" y="12" width="5" height="1" fill="#000"/><path d="M2 6.5 L6.5 2 L11 5 L8.5 8.6 Z" fill="url(#ck)"/><rect x="7" y="2" width="6" height="5" fill="#c4c4c4"/><rect x="7" y="1" width="6" height="1" fill="#000"/><rect x="13" y="2" width="1" height="1" fill="#000"/><rect x="13" y="5" width="1" height="1" fill="#000"/><rect x="14" y="1" width="2" height="7" fill="#00008b"/></svg>
<div style="position:absolute;left:167px;top:218px;height:16px;line-height:16px;white-space:nowrap;color:#1e1e1e;font-size:12px;transform:scaleX(0.9981);transform-origin:0 0">paracutter</div>
<div style="position:absolute;left:130px;top:245px;width:14px;height:1px;background:repeating-linear-gradient(to right,#7a7a7a 0 1px,transparent 1px 2px)"></div>
<svg style="position:absolute;left:144px;top:236px;" width="17" height="16" viewBox="0 0 17 16" shape-rendering="crispEdges"><rect x="0.5" y="4.5" width="11" height="10" fill="#fff" stroke="#000"/><rect x="2" y="10" width="2" height="1" fill="#000"/><rect x="5" y="10" width="5" height="1" fill="#000"/><rect x="2" y="12" width="2" height="1" fill="#000"/><rect x="5" y="12" width="5" height="1" fill="#000"/><path d="M2 6.5 L6.5 2 L11 5 L8.5 8.6 Z" fill="url(#ck)"/><rect x="7" y="2" width="6" height="5" fill="#c4c4c4"/><rect x="7" y="1" width="6" height="1" fill="#000"/><rect x="13" y="2" width="1" height="1" fill="#000"/><rect x="13" y="5" width="1" height="1" fill="#000"/><rect x="14" y="1" width="2" height="7" fill="#00008b"/></svg>
<div style="position:absolute;left:167px;top:236px;height:16px;line-height:16px;white-space:nowrap;color:#1e1e1e;font-size:12px;transform:scaleX(0.8963);transform-origin:0 0">extra</div>
<div style="position:absolute;left:130px;top:263px;width:14px;height:1px;background:repeating-linear-gradient(to right,#7a7a7a 0 1px,transparent 1px 2px)"></div>
<svg style="position:absolute;left:144px;top:254px;" width="17" height="16" viewBox="0 0 17 16" shape-rendering="crispEdges"><rect x="0.5" y="4.5" width="11" height="10" fill="#fff" stroke="#000"/><rect x="2" y="10" width="2" height="1" fill="#000"/><rect x="5" y="10" width="5" height="1" fill="#000"/><rect x="2" y="12" width="2" height="1" fill="#000"/><rect x="5" y="12" width="5" height="1" fill="#000"/><path d="M2 6.5 L6.5 2 L11 5 L8.5 8.6 Z" fill="url(#ck)"/><rect x="7" y="2" width="6" height="5" fill="#c4c4c4"/><rect x="7" y="1" width="6" height="1" fill="#000"/><rect x="13" y="2" width="1" height="1" fill="#000"/><rect x="13" y="5" width="1" height="1" fill="#000"/><rect x="14" y="1" width="2" height="7" fill="#00008b"/></svg>
<div style="position:absolute;left:167px;top:254px;height:16px;line-height:16px;white-space:nowrap;color:#1e1e1e;font-size:12px;transform:scaleX(1.0189);transform-origin:0 0">Solution mode file</div>
<div style="position:absolute;left:137px;top:281px;width:6px;height:1px;background:repeating-linear-gradient(to right,#7a7a7a 0 1px,transparent 1px 2px)"></div>
<div style="position:absolute;left:126px;top:273px;width:8px;height:15px;background:#fdfdfd"></div>
<svg style="position:absolute;left:127px;top:278px;" width="6" height="6" viewBox="0 0 6 6"><path d="M0 5.8 L5.8 0 L5.8 5.8 Z" fill="#3a3a3a"/></svg>
<svg style="position:absolute;left:145px;top:273px;" width="15" height="14" viewBox="0 0 15 14" shape-rendering="crispEdges"><path d="M0 1 L1 0 L6 0 L7 1 L7 2 L15 2 L15 14 L0 14 Z" fill="#e8760c"/><rect x="0" y="3" width="15" height="11" fill="#e6a71b"/></svg>
<div style="position:absolute;left:167px;top:272px;height:16px;line-height:16px;white-space:nowrap;color:#1e1e1e;font-size:12px;transform:scaleX(1.014);transform-origin:0 0">DutyType</div>
<div style="position:absolute;left:153px;top:299px;width:14px;height:1px;background:repeating-linear-gradient(to right,#7a7a7a 0 1px,transparent 1px 2px)"></div>
<svg style="position:absolute;left:167px;top:290px;" width="17" height="16" viewBox="0 0 17 16" shape-rendering="crispEdges"><rect x="0.5" y="4.5" width="11" height="10" fill="#fff" stroke="#000"/><rect x="2" y="10" width="2" height="1" fill="#000"/><rect x="5" y="10" width="5" height="1" fill="#000"/><rect x="2" y="12" width="2" height="1" fill="#000"/><rect x="5" y="12" width="5" height="1" fill="#000"/><path d="M2 6.5 L6.5 2 L11 5 L8.5 8.6 Z" fill="url(#ck)"/><rect x="7" y="2" width="6" height="5" fill="#c4c4c4"/><rect x="7" y="1" width="6" height="1" fill="#000"/><rect x="13" y="2" width="1" height="1" fill="#000"/><rect x="13" y="5" width="1" height="1" fill="#000"/><rect x="14" y="1" width="2" height="7" fill="#00008b"/></svg>
<div style="position:absolute;left:190px;top:290px;height:16px;line-height:16px;white-space:nowrap;color:#1e1e1e;font-size:12px;transform:scaleX(1.0041);transform-origin:0 0">Meal Location</div>
<div style="position:absolute;left:153px;top:317px;width:14px;height:1px;background:repeating-linear-gradient(to right,#7a7a7a 0 1px,transparent 1px 2px)"></div>
<svg style="position:absolute;left:167px;top:308px;" width="17" height="16" viewBox="0 0 17 16" shape-rendering="crispEdges"><rect x="0.5" y="4.5" width="11" height="10" fill="#fff" stroke="#000"/><rect x="2" y="10" width="2" height="1" fill="#000"/><rect x="5" y="10" width="5" height="1" fill="#000"/><rect x="2" y="12" width="2" height="1" fill="#000"/><rect x="5" y="12" width="5" height="1" fill="#000"/><path d="M2 6.5 L6.5 2 L11 5 L8.5 8.6 Z" fill="url(#ck)"/><rect x="7" y="2" width="6" height="5" fill="#c4c4c4"/><rect x="7" y="1" width="6" height="1" fill="#000"/><rect x="13" y="2" width="1" height="1" fill="#000"/><rect x="13" y="5" width="1" height="1" fill="#000"/><rect x="14" y="1" width="2" height="7" fill="#00008b"/></svg>
<div style="position:absolute;left:190px;top:308px;height:16px;line-height:16px;white-space:nowrap;color:#1e1e1e;font-size:12px;transform:scaleX(1.0158);transform-origin:0 0">Meal Abbreviation</div>
<div style="position:absolute;left:153px;top:335px;width:14px;height:1px;background:repeating-linear-gradient(to right,#7a7a7a 0 1px,transparent 1px 2px)"></div>
<svg style="position:absolute;left:167px;top:326px;" width="17" height="16" viewBox="0 0 17 16" shape-rendering="crispEdges"><rect x="0.5" y="4.5" width="11" height="10" fill="#fff" stroke="#000"/><rect x="2" y="10" width="2" height="1" fill="#000"/><rect x="5" y="10" width="5" height="1" fill="#000"/><rect x="2" y="12" width="2" height="1" fill="#000"/><rect x="5" y="12" width="5" height="1" fill="#000"/><path d="M2 6.5 L6.5 2 L11 5 L8.5 8.6 Z" fill="url(#ck)"/><rect x="7" y="2" width="6" height="5" fill="#c4c4c4"/><rect x="7" y="1" width="6" height="1" fill="#000"/><rect x="13" y="2" width="1" height="1" fill="#000"/><rect x="13" y="5" width="1" height="1" fill="#000"/><rect x="14" y="1" width="2" height="7" fill="#00008b"/></svg>
<div style="position:absolute;left:190px;top:326px;height:16px;line-height:16px;white-space:nowrap;color:#1e1e1e;font-size:12px;transform:scaleX(0.9767);transform-origin:0 0">Traffic Second SignOn</div>
<div style="position:absolute;left:137px;top:353px;width:6px;height:1px;background:repeating-linear-gradient(to right,#7a7a7a 0 1px,transparent 1px 2px)"></div>
<div style="position:absolute;left:126px;top:345px;width:8px;height:15px;background:#fdfdfd"></div>
<svg style="position:absolute;left:127px;top:350px;" width="6" height="6" viewBox="0 0 6 6"><path d="M0 5.8 L5.8 0 L5.8 5.8 Z" fill="#3a3a3a"/></svg>
<svg style="position:absolute;left:145px;top:345px;" width="15" height="14" viewBox="0 0 15 14" shape-rendering="crispEdges"><path d="M0 1 L1 0 L6 0 L7 1 L7 2 L15 2 L15 14 L0 14 Z" fill="#e8760c"/><rect x="0" y="3" width="15" height="11" fill="#e6a71b"/></svg>
<div style="position:absolute;left:167px;top:344px;height:16px;line-height:16px;white-space:nowrap;color:#1e1e1e;font-size:12px;transform:scaleX(0.8889);transform-origin:0 0">ITF</div>
<div style="position:absolute;left:153px;top:371px;width:14px;height:1px;background:repeating-linear-gradient(to right,#7a7a7a 0 1px,transparent 1px 2px)"></div>
<svg style="position:absolute;left:167px;top:362px;" width="17" height="16" viewBox="0 0 17 16" shape-rendering="crispEdges"><rect x="0.5" y="4.5" width="11" height="10" fill="#fff" stroke="#000"/><rect x="2" y="10" width="2" height="1" fill="#000"/><rect x="5" y="10" width="5" height="1" fill="#000"/><rect x="2" y="12" width="2" height="1" fill="#000"/><rect x="5" y="12" width="5" height="1" fill="#000"/><path d="M2 6.5 L6.5 2 L11 5 L8.5 8.6 Z" fill="url(#ck)"/><rect x="7" y="2" width="6" height="5" fill="#c4c4c4"/><rect x="7" y="1" width="6" height="1" fill="#000"/><rect x="13" y="2" width="1" height="1" fill="#000"/><rect x="13" y="5" width="1" height="1" fill="#000"/><rect x="14" y="1" width="2" height="7" fill="#00008b"/></svg>
<div style="position:absolute;left:190px;top:362px;height:16px;line-height:16px;white-space:nowrap;color:#1e1e1e;font-size:12px;transform:scaleX(0.9809);transform-origin:0 0">Input Source</div>
<div style="position:absolute;left:153px;top:389px;width:14px;height:1px;background:repeating-linear-gradient(to right,#7a7a7a 0 1px,transparent 1px 2px)"></div>
<svg style="position:absolute;left:167px;top:380px;" width="17" height="16" viewBox="0 0 17 16" shape-rendering="crispEdges"><rect x="0.5" y="4.5" width="11" height="10" fill="#fff" stroke="#000"/><rect x="2" y="10" width="2" height="1" fill="#000"/><rect x="5" y="10" width="5" height="1" fill="#000"/><rect x="2" y="12" width="2" height="1" fill="#000"/><rect x="5" y="12" width="5" height="1" fill="#000"/><path d="M2 6.5 L6.5 2 L11 5 L8.5 8.6 Z" fill="url(#ck)"/><rect x="7" y="2" width="6" height="5" fill="#c4c4c4"/><rect x="7" y="1" width="6" height="1" fill="#000"/><rect x="13" y="2" width="1" height="1" fill="#000"/><rect x="13" y="5" width="1" height="1" fill="#000"/><rect x="14" y="1" width="2" height="7" fill="#00008b"/></svg>
<div style="position:absolute;left:190px;top:380px;height:16px;line-height:16px;white-space:nowrap;color:#1e1e1e;font-size:12px;transform:scaleX(0.9403);transform-origin:0 0">Vehicle Class</div>
<div style="position:absolute;left:137px;top:407px;width:6px;height:1px;background:repeating-linear-gradient(to right,#7a7a7a 0 1px,transparent 1px 2px)"></div>
<div style="position:absolute;left:126px;top:399px;width:8px;height:15px;background:#fdfdfd"></div>
<svg style="position:absolute;left:127px;top:404px;" width="6" height="6" viewBox="0 0 6 6"><path d="M0 5.8 L5.8 0 L5.8 5.8 Z" fill="#3a3a3a"/></svg>
<svg style="position:absolute;left:145px;top:399px;" width="15" height="14" viewBox="0 0 15 14" shape-rendering="crispEdges"><path d="M0 1 L1 0 L6 0 L7 1 L7 2 L15 2 L15 14 L0 14 Z" fill="#e8760c"/><rect x="0" y="3" width="15" height="11" fill="#e6a71b"/></svg>
<div style="position:absolute;left:167px;top:398px;height:16px;line-height:16px;white-space:nowrap;color:#1e1e1e;font-size:12px;transform:scaleX(1.0071);transform-origin:0 0">LinkInfo</div>
<div style="position:absolute;left:160px;top:425px;width:6px;height:1px;background:repeating-linear-gradient(to right,#7a7a7a 0 1px,transparent 1px 2px)"></div>
<div style="position:absolute;left:149px;top:417px;width:8px;height:15px;background:#fdfdfd"></div>
<svg style="position:absolute;left:151px;top:421px;" width="6" height="9" viewBox="0 0 6 9"><path d="M0.5 0.5 L5 4.5 L0.5 8.5 Z" fill="none" stroke="#8a8a8a" stroke-width="1"/></svg>
<svg style="position:absolute;left:168px;top:417px;" width="15" height="14" viewBox="0 0 15 14" shape-rendering="crispEdges"><path d="M0 1 L1 0 L6 0 L7 1 L7 2 L15 2 L15 14 L0 14 Z" fill="#e8760c"/><rect x="0" y="3" width="15" height="11" fill="#e6a71b"/></svg>
<div style="position:absolute;left:190px;top:416px;height:16px;line-height:16px;white-space:nowrap;color:#1e1e1e;font-size:12px;transform:scaleX(0.8868);transform-origin:0 0">VClass</div>
<div style="position:absolute;left:137px;top:443px;width:6px;height:1px;background:repeating-linear-gradient(to right,#7a7a7a 0 1px,transparent 1px 2px)"></div>
<div style="position:absolute;left:126px;top:435px;width:8px;height:15px;background:#fdfdfd"></div>
<svg style="position:absolute;left:127px;top:440px;" width="6" height="6" viewBox="0 0 6 6"><path d="M0 5.8 L5.8 0 L5.8 5.8 Z" fill="#3a3a3a"/></svg>
<svg style="position:absolute;left:145px;top:435px;" width="15" height="14" viewBox="0 0 15 14" shape-rendering="crispEdges"><path d="M0 1 L1 0 L6 0 L7 1 L7 2 L15 2 L15 14 L0 14 Z" fill="#e8760c"/><rect x="0" y="3" width="15" height="11" fill="#e6a71b"/></svg>
<div style="position:absolute;left:167px;top:434px;height:16px;line-height:16px;white-space:nowrap;color:#1e1e1e;font-size:12px;transform:scaleX(0.86);transform-origin:0 0">ROF</div>
<div style="position:absolute;left:153px;top:461px;width:14px;height:1px;background:repeating-linear-gradient(to right,#7a7a7a 0 1px,transparent 1px 2px)"></div>
<svg style="position:absolute;left:167px;top:452px;" width="17" height="16" viewBox="0 0 17 16" shape-rendering="crispEdges"><rect x="0.5" y="4.5" width="11" height="10" fill="#fff" stroke="#000"/><rect x="2" y="10" width="2" height="1" fill="#000"/><rect x="5" y="10" width="5" height="1" fill="#000"/><rect x="2" y="12" width="2" height="1" fill="#000"/><rect x="5" y="12" width="5" height="1" fill="#000"/><path d="M2 6.5 L6.5 2 L11 5 L8.5 8.6 Z" fill="url(#ck)"/><rect x="7" y="2" width="6" height="5" fill="#c4c4c4"/><rect x="7" y="1" width="6" height="1" fill="#000"/><rect x="13" y="2" width="1" height="1" fill="#000"/><rect x="13" y="5" width="1" height="1" fill="#000"/><rect x="14" y="1" width="2" height="7" fill="#00008b"/></svg>
<div style="position:absolute;left:190px;top:452px;height:16px;line-height:16px;white-space:nowrap;color:#1e1e1e;font-size:12px;transform:scaleX(0.9483);transform-origin:0 0">MATRICSHOME</div>
<div style="position:absolute;left:153px;top:479px;width:14px;height:1px;background:repeating-linear-gradient(to right,#7a7a7a 0 1px,transparent 1px 2px)"></div>
<svg style="position:absolute;left:167px;top:470px;" width="17" height="16" viewBox="0 0 17 16" shape-rendering="crispEdges"><rect x="0.5" y="4.5" width="11" height="10" fill="#fff" stroke="#000"/><rect x="2" y="10" width="2" height="1" fill="#000"/><rect x="5" y="10" width="5" height="1" fill="#000"/><rect x="2" y="12" width="2" height="1" fill="#000"/><rect x="5" y="12" width="5" height="1" fill="#000"/><path d="M2 6.5 L6.5 2 L11 5 L8.5 8.6 Z" fill="url(#ck)"/><rect x="7" y="2" width="6" height="5" fill="#c4c4c4"/><rect x="7" y="1" width="6" height="1" fill="#000"/><rect x="13" y="2" width="1" height="1" fill="#000"/><rect x="13" y="5" width="1" height="1" fill="#000"/><rect x="14" y="1" width="2" height="7" fill="#00008b"/></svg>
<div style="position:absolute;left:190px;top:470px;height:16px;line-height:16px;white-space:nowrap;color:#1e1e1e;font-size:12px;transform:scaleX(1.0388);transform-origin:0 0">matcru-ident</div>
<div style="position:absolute;left:91px;top:497px;width:6px;height:1px;background:repeating-linear-gradient(to right,#7a7a7a 0 1px,transparent 1px 2px)"></div>
<div style="position:absolute;left:80px;top:489px;width:8px;height:15px;background:#fdfdfd"></div>
<svg style="position:absolute;left:82px;top:493px;" width="6" height="9" viewBox="0 0 6 9"><path d="M0.5 0.5 L5 4.5 L0.5 8.5 Z" fill="none" stroke="#8a8a8a" stroke-width="1"/></svg>
<svg style="position:absolute;left:99px;top:489px;" width="15" height="14" viewBox="0 0 15 14" shape-rendering="crispEdges"><path d="M0 1 L1 0 L6 0 L7 1 L7 2 L15 2 L15 14 L0 14 Z" fill="#e8760c"/><rect x="0" y="3" width="15" height="11" fill="#e6a71b"/></svg>
<div style="position:absolute;left:121px;top:488px;height:16px;line-height:16px;white-space:nowrap;color:#1e1e1e;font-size:12px;transform:scaleX(1.0382);transform-origin:0 0">Import</div>
<div style="position:absolute;left:68px;top:515px;width:6px;height:1px;background:repeating-linear-gradient(to right,#7a7a7a 0 1px,transparent 1px 2px)"></div>
<div style="position:absolute;left:57px;top:507px;width:8px;height:15px;background:#fdfdfd"></div>
<svg style="position:absolute;left:59px;top:511px;" width="6" height="9" viewBox="0 0 6 9"><path d="M0.5 0.5 L5 4.5 L0.5 8.5 Z" fill="none" stroke="#8a8a8a" stroke-width="1"/></svg>
<svg style="position:absolute;left:76px;top:507px;" width="15" height="14" viewBox="0 0 15 14" shape-rendering="crispEdges"><path d="M0 1 L1 0 L6 0 L7 1 L7 2 L15 2 L15 14 L0 14 Z" fill="#e8760c"/><rect x="0" y="3" width="15" height="11" fill="#e6a71b"/></svg>
<div style="position:absolute;left:98px;top:506px;height:16px;line-height:16px;white-space:nowrap;color:#1e1e1e;font-size:12px;transform:scaleX(0.93);transform-origin:0 0">Plans</div>
<div style="position:absolute;left:68px;top:533px;width:6px;height:1px;background:repeating-linear-gradient(to right,#7a7a7a 0 1px,transparent 1px 2px)"></div>
<div style="position:absolute;left:57px;top:525px;width:8px;height:15px;background:#fdfdfd"></div>
<svg style="position:absolute;left:59px;top:529px;" width="6" height="9" viewBox="0 0 6 9"><path d="M0.5 0.5 L5 4.5 L0.5 8.5 Z" fill="none" stroke="#8a8a8a" stroke-width="1"/></svg>
<svg style="position:absolute;left:76px;top:525px;" width="15" height="14" viewBox="0 0 15 14" shape-rendering="crispEdges"><path d="M0 1 L1 0 L6 0 L7 1 L7 2 L15 2 L15 14 L0 14 Z" fill="#e8760c"/><rect x="0" y="3" width="15" height="11" fill="#e6a71b"/></svg>
<div style="position:absolute;left:98px;top:524px;height:16px;line-height:16px;white-space:nowrap;color:#1e1e1e;font-size:12px;transform:scaleX(0.93);transform-origin:0 0">Rules</div>
<div style="position:absolute;left:68px;top:551px;width:6px;height:1px;background:repeating-linear-gradient(to right,#7a7a7a 0 1px,transparent 1px 2px)"></div>
<div style="position:absolute;left:57px;top:543px;width:8px;height:15px;background:#fdfdfd"></div>
<svg style="position:absolute;left:59px;top:547px;" width="6" height="9" viewBox="0 0 6 9"><path d="M0.5 0.5 L5 4.5 L0.5 8.5 Z" fill="none" stroke="#8a8a8a" stroke-width="1"/></svg>
<svg style="position:absolute;left:76px;top:543px;" width="15" height="14" viewBox="0 0 15 14" shape-rendering="crispEdges"><path d="M0 1 L1 0 L6 0 L7 1 L7 2 L15 2 L15 14 L0 14 Z" fill="#e8760c"/><rect x="0" y="3" width="15" height="11" fill="#e6a71b"/></svg>
<div style="position:absolute;left:98px;top:542px;height:16px;line-height:16px;white-space:nowrap;color:#1e1e1e;font-size:12px;transform:scaleX(0.9326);transform-origin:0 0">Schedule Server</div>
<div style="position:absolute;left:68px;top:569px;width:6px;height:1px;background:repeating-linear-gradient(to right,#7a7a7a 0 1px,transparent 1px 2px)"></div>
<div style="position:absolute;left:57px;top:561px;width:8px;height:15px;background:#fdfdfd"></div>
<svg style="position:absolute;left:59px;top:565px;" width="6" height="9" viewBox="0 0 6 9"><path d="M0.5 0.5 L5 4.5 L0.5 8.5 Z" fill="none" stroke="#8a8a8a" stroke-width="1"/></svg>
<svg style="position:absolute;left:76px;top:561px;" width="15" height="14" viewBox="0 0 15 14" shape-rendering="crispEdges"><path d="M0 1 L1 0 L6 0 L7 1 L7 2 L15 2 L15 14 L0 14 Z" fill="#e8760c"/><rect x="0" y="3" width="15" height="11" fill="#e6a71b"/></svg>
<div style="position:absolute;left:98px;top:560px;height:16px;line-height:16px;white-space:nowrap;color:#1e1e1e;font-size:12px;transform:scaleX(0.9564);transform-origin:0 0">Weekly</div>
<div style="position:absolute;left:45px;top:587px;width:6px;height:1px;background:repeating-linear-gradient(to right,#7a7a7a 0 1px,transparent 1px 2px)"></div>
<div style="position:absolute;left:34px;top:579px;width:8px;height:15px;background:#fdfdfd"></div>
<svg style="position:absolute;left:36px;top:583px;" width="6" height="9" viewBox="0 0 6 9"><path d="M0.5 0.5 L5 4.5 L0.5 8.5 Z" fill="none" stroke="#8a8a8a" stroke-width="1"/></svg>
<svg style="position:absolute;left:53px;top:579px;" width="15" height="14" viewBox="0 0 15 14" shape-rendering="crispEdges"><path d="M0 1 L1 0 L6 0 L7 1 L7 2 L15 2 L15 14 L0 14 Z" fill="#e8760c"/><rect x="0" y="3" width="15" height="11" fill="#e6a71b"/></svg>
<div style="position:absolute;left:75px;top:578px;height:16px;line-height:16px;white-space:nowrap;color:#1e1e1e;font-size:12px;transform:scaleX(0.871);transform-origin:0 0">PASS</div>
<div style="position:absolute;left:45px;top:605px;width:6px;height:1px;background:repeating-linear-gradient(to right,#7a7a7a 0 1px,transparent 1px 2px)"></div>
<div style="position:absolute;left:34px;top:597px;width:8px;height:15px;background:#fdfdfd"></div>
<svg style="position:absolute;left:36px;top:601px;" width="6" height="9" viewBox="0 0 6 9"><path d="M0.5 0.5 L5 4.5 L0.5 8.5 Z" fill="none" stroke="#8a8a8a" stroke-width="1"/></svg>
<svg style="position:absolute;left:53px;top:597px;" width="15" height="14" viewBox="0 0 15 14" shape-rendering="crispEdges"><path d="M0 1 L1 0 L6 0 L7 1 L7 2 L15 2 L15 14 L0 14 Z" fill="#e8760c"/><rect x="0" y="3" width="15" height="11" fill="#e6a71b"/></svg>
<div style="position:absolute;left:75px;top:596px;height:16px;line-height:16px;white-space:nowrap;color:#1e1e1e;font-size:12px;transform:scaleX(0.9685);transform-origin:0 0">PassEligibility</div>
<div style="position:absolute;left:45px;top:623px;width:6px;height:1px;background:repeating-linear-gradient(to right,#7a7a7a 0 1px,transparent 1px 2px)"></div>
<div style="position:absolute;left:34px;top:615px;width:8px;height:15px;background:#fdfdfd"></div>
<svg style="position:absolute;left:36px;top:619px;" width="6" height="9" viewBox="0 0 6 9"><path d="M0.5 0.5 L5 4.5 L0.5 8.5 Z" fill="none" stroke="#8a8a8a" stroke-width="1"/></svg>
<svg style="position:absolute;left:53px;top:615px;" width="15" height="14" viewBox="0 0 15 14" shape-rendering="crispEdges"><path d="M0 1 L1 0 L6 0 L7 1 L7 2 L15 2 L15 14 L0 14 Z" fill="#e8760c"/><rect x="0" y="3" width="15" height="11" fill="#e6a71b"/></svg>
<div style="position:absolute;left:75px;top:614px;height:16px;line-height:16px;white-space:nowrap;color:#1e1e1e;font-size:12px;transform:scaleX(0.86);transform-origin:0 0">PassPTE</div>
<div style="position:absolute;left:45px;top:641px;width:6px;height:1px;background:repeating-linear-gradient(to right,#7a7a7a 0 1px,transparent 1px 2px)"></div>
<div style="position:absolute;left:34px;top:633px;width:8px;height:15px;background:#fdfdfd"></div>
<svg style="position:absolute;left:36px;top:637px;" width="6" height="9" viewBox="0 0 6 9"><path d="M0.5 0.5 L5 4.5 L0.5 8.5 Z" fill="none" stroke="#8a8a8a" stroke-width="1"/></svg>
<svg style="position:absolute;left:53px;top:633px;" width="15" height="14" viewBox="0 0 15 14" shape-rendering="crispEdges"><path d="M0 1 L1 0 L6 0 L7 1 L7 2 L15 2 L15 14 L0 14 Z" fill="#e8760c"/><rect x="0" y="3" width="15" height="11" fill="#e6a71b"/></svg>
<div style="position:absolute;left:75px;top:632px;height:16px;line-height:16px;white-space:nowrap;color:#1e1e1e;font-size:12px;transform:scaleX(0.8588);transform-origin:0 0">PassRTV</div>
<div style="position:absolute;left:45px;top:659px;width:6px;height:1px;background:repeating-linear-gradient(to right,#7a7a7a 0 1px,transparent 1px 2px)"></div>
<div style="position:absolute;left:34px;top:651px;width:8px;height:15px;background:#fdfdfd"></div>
<svg style="position:absolute;left:36px;top:655px;" width="6" height="9" viewBox="0 0 6 9"><path d="M0.5 0.5 L5 4.5 L0.5 8.5 Z" fill="none" stroke="#8a8a8a" stroke-width="1"/></svg>
<svg style="position:absolute;left:53px;top:651px;" width="15" height="14" viewBox="0 0 15 14" shape-rendering="crispEdges"><path d="M0 1 L1 0 L6 0 L7 1 L7 2 L15 2 L15 14 L0 14 Z" fill="#e8760c"/><rect x="0" y="3" width="15" height="11" fill="#e6a71b"/></svg>
<div style="position:absolute;left:75px;top:650px;height:16px;line-height:16px;white-space:nowrap;color:#1e1e1e;font-size:12px;transform:scaleX(0.9432);transform-origin:0 0">Rapid Response</div>
<div style="position:absolute;left:45px;top:677px;width:6px;height:1px;background:repeating-linear-gradient(to right,#7a7a7a 0 1px,transparent 1px 2px)"></div>
<div style="position:absolute;left:34px;top:669px;width:8px;height:15px;background:#fdfdfd"></div>
<svg style="position:absolute;left:36px;top:673px;" width="6" height="9" viewBox="0 0 6 9"><path d="M0.5 0.5 L5 4.5 L0.5 8.5 Z" fill="none" stroke="#8a8a8a" stroke-width="1"/></svg>
<svg style="position:absolute;left:53px;top:669px;" width="15" height="14" viewBox="0 0 15 14" shape-rendering="crispEdges"><path d="M0 1 L1 0 L6 0 L7 1 L7 2 L15 2 L15 14 L0 14 Z" fill="#e8760c"/><rect x="0" y="3" width="15" height="11" fill="#e6a71b"/></svg>
<div style="position:absolute;left:75px;top:668px;height:16px;line-height:16px;white-space:nowrap;color:#1e1e1e;font-size:12px;transform:scaleX(0.9889);transform-origin:0 0">School</div>
</div>
<div style="position:absolute;left:776px;top:99px;width:873px;height:684px;background:#e8e8e8;border:1px solid #d6d6d6;box-sizing:border-box"></div>
<div style="position:absolute;left:778px;top:101px;width:869px;height:583px;background:#fff;border-left:1px solid #a0a0a0;border-top:1px solid #a0a0a0;box-sizing:border-box"></div>
<div style="position:absolute;left:779px;top:102px;width:851px;height:22px;background:#e6e6e6"></div>
<div style="position:absolute;left:779px;top:124px;width:851px;height:1px;background:#a0a0a0"></div>
<div style="position:absolute;left:805px;top:102px;width:1px;height:22px;background:#a0a0a0"></div>
<div style="position:absolute;left:1165px;top:102px;width:1px;height:22px;background:#a0a0a0"></div>
<div style="position:absolute;left:1615px;top:102px;width:1px;height:22px;background:#a0a0a0"></div>
<div style="position:absolute;left:805px;top:105px;height:16px;line-height:16px;white-space:nowrap;color:#333;font-size:11.6px;width:360px;text-align:center">Name</div>
<div style="position:absolute;left:1166px;top:105px;height:16px;line-height:16px;white-space:nowrap;color:#333;font-size:11.6px;width:449px;text-align:center">Value</div>
<div style="position:absolute;left:779px;top:125px;width:851px;height:542px;overflow:hidden">
<div style="position:absolute;left:0px;top:0px;width:26px;height:19px;background:#e6e6e6"></div>
<div style="position:absolute;left:26px;top:0px;width:1px;height:19px;background:#a0a0a0"></div>
<div style="position:absolute;left:386px;top:0px;width:1px;height:19px;background:repeating-linear-gradient(to bottom,#a0a0a0 0 1px,transparent 1px 2px)"></div>
<div style="position:absolute;left:836px;top:0px;width:1px;height:19px;background:repeating-linear-gradient(to bottom,#a0a0a0 0 1px,transparent 1px 2px)"></div>
<div style="position:absolute;left:29px;top:-1px;height:16px;line-height:16px;white-space:nowrap;color:#000;font-size:12px;transform:scaleX(0.9398);transform-origin:0 0">Jobs/Refresh Period</div>
<div style="position:absolute;left:389px;top:-1px;height:16px;line-height:16px;white-space:nowrap;color:#000;font-size:12px;transform:scaleX(1.0);transform-origin:0 0">0</div>
<div style="position:absolute;left:838px;top:1px;width:14px;height:16px;background:#eeeeee;border:1px solid #a8a8a8;border-right:none;border-radius:4px 0 0 4px;box-sizing:border-box"></div>
<svg style="position:absolute;left:10px;top:3px;" width="7" height="12" viewBox="0 0 7 12"><path d="M0 0 L6 6 L0 12Z" fill="#000"/></svg>
<div style="position:absolute;left:0px;top:19px;width:26px;height:16px;background:#e6e6e6"></div>
<div style="position:absolute;left:0px;top:18px;width:26px;height:1px;background:#a0a0a0"></div>
<div style="position:absolute;left:26px;top:19px;width:1px;height:16px;background:#a0a0a0"></div>
<div style="position:absolute;left:27px;top:18px;width:824px;height:1px;background:repeating-linear-gradient(to right,#a0a0a0 0 1px,transparent 1px 2px)"></div>
<div style="position:absolute;left:386px;top:19px;width:1px;height:16px;background:repeating-linear-gradient(to bottom,#a0a0a0 0 1px,transparent 1px 2px)"></div>
<div style="position:absolute;left:836px;top:19px;width:1px;height:16px;background:repeating-linear-gradient(to bottom,#a0a0a0 0 1px,transparent 1px 2px)"></div>
<div style="position:absolute;left:29px;top:18px;height:16px;line-height:16px;white-space:nowrap;color:#000;font-size:12px;transform:scaleX(0.9298);transform-origin:0 0">Jobs/Default Page Size</div>
<div style="position:absolute;left:389px;top:18px;height:16px;line-height:16px;white-space:nowrap;color:#000;font-size:12px;transform:scaleX(0.89);transform-origin:0 0">500</div>
<div style="position:absolute;left:0px;top:35px;width:26px;height:16px;background:#e6e6e6"></div>
<div style="position:absolute;left:0px;top:34px;width:26px;height:1px;background:#a0a0a0"></div>
<div style="position:absolute;left:26px;top:35px;width:1px;height:16px;background:#a0a0a0"></div>
<div style="position:absolute;left:27px;top:34px;width:824px;height:1px;background:repeating-linear-gradient(to right,#a0a0a0 0 1px,transparent 1px 2px)"></div>
<div style="position:absolute;left:386px;top:35px;width:1px;height:16px;background:repeating-linear-gradient(to bottom,#a0a0a0 0 1px,transparent 1px 2px)"></div>
<div style="position:absolute;left:836px;top:35px;width:1px;height:16px;background:repeating-linear-gradient(to bottom,#a0a0a0 0 1px,transparent 1px 2px)"></div>
<div style="position:absolute;left:29px;top:34px;height:16px;line-height:16px;white-space:nowrap;color:#000;font-size:12px;transform:scaleX(0.97);transform-origin:0 0">Jobs/Context/Request/relink</div>
<div style="position:absolute;left:389px;top:34px;height:16px;line-height:16px;white-space:nowrap;color:#000;font-size:12px;transform:scaleX(1.0);transform-origin:0 0">0</div>
<div style="position:absolute;left:0px;top:51px;width:26px;height:16px;background:#e6e6e6"></div>
<div style="position:absolute;left:0px;top:50px;width:26px;height:1px;background:#a0a0a0"></div>
<div style="position:absolute;left:26px;top:51px;width:1px;height:16px;background:#a0a0a0"></div>
<div style="position:absolute;left:27px;top:50px;width:824px;height:1px;background:repeating-linear-gradient(to right,#a0a0a0 0 1px,transparent 1px 2px)"></div>
<div style="position:absolute;left:386px;top:51px;width:1px;height:16px;background:repeating-linear-gradient(to bottom,#a0a0a0 0 1px,transparent 1px 2px)"></div>
<div style="position:absolute;left:836px;top:51px;width:1px;height:16px;background:repeating-linear-gradient(to bottom,#a0a0a0 0 1px,transparent 1px 2px)"></div>
<div style="position:absolute;left:29px;top:50px;height:16px;line-height:16px;white-space:nowrap;color:#000;font-size:12px;transform:scaleX(0.9691);transform-origin:0 0">Jobs/Context/Request/runmatcru</div>
<div style="position:absolute;left:389px;top:50px;height:16px;line-height:16px;white-space:nowrap;color:#000;font-size:12px;transform:scaleX(0.8);transform-origin:0 0">1</div>
<div style="position:absolute;left:0px;top:67px;width:26px;height:16px;background:#e6e6e6"></div>
<div style="position:absolute;left:0px;top:66px;width:26px;height:1px;background:#a0a0a0"></div>
<div style="position:absolute;left:26px;top:67px;width:1px;height:16px;background:#a0a0a0"></div>
<div style="position:absolute;left:27px;top:66px;width:824px;height:1px;background:repeating-linear-gradient(to right,#a0a0a0 0 1px,transparent 1px 2px)"></div>
<div style="position:absolute;left:386px;top:67px;width:1px;height:16px;background:repeating-linear-gradient(to bottom,#a0a0a0 0 1px,transparent 1px 2px)"></div>
<div style="position:absolute;left:836px;top:67px;width:1px;height:16px;background:repeating-linear-gradient(to bottom,#a0a0a0 0 1px,transparent 1px 2px)"></div>
<div style="position:absolute;left:29px;top:66px;height:16px;line-height:16px;white-space:nowrap;color:#000;font-size:12px;transform:scaleX(0.9586);transform-origin:0 0">Jobs/Context/Request/driver</div>
<div style="position:absolute;left:389px;top:66px;height:16px;line-height:16px;white-space:nowrap;color:#000;font-size:12px;transform:scaleX(0.9744);transform-origin:0 0">startAustrics.pl</div>
<div style="position:absolute;left:0px;top:83px;width:26px;height:16px;background:#e6e6e6"></div>
<div style="position:absolute;left:0px;top:82px;width:26px;height:1px;background:#a0a0a0"></div>
<div style="position:absolute;left:26px;top:83px;width:1px;height:16px;background:#a0a0a0"></div>
<div style="position:absolute;left:27px;top:82px;width:824px;height:1px;background:repeating-linear-gradient(to right,#a0a0a0 0 1px,transparent 1px 2px)"></div>
<div style="position:absolute;left:386px;top:83px;width:1px;height:16px;background:repeating-linear-gradient(to bottom,#a0a0a0 0 1px,transparent 1px 2px)"></div>
<div style="position:absolute;left:836px;top:83px;width:1px;height:16px;background:repeating-linear-gradient(to bottom,#a0a0a0 0 1px,transparent 1px 2px)"></div>
<div style="position:absolute;left:29px;top:82px;height:16px;line-height:16px;white-space:nowrap;color:#000;font-size:12px;transform:scaleX(0.9575);transform-origin:0 0">Jobs/Context/Request/vclassmapping</div>
<div style="position:absolute;left:389px;top:82px;height:16px;line-height:16px;white-space:nowrap;color:#000;font-size:12px;transform:scaleX(1.0);transform-origin:0 0">0</div>
<div style="position:absolute;left:0px;top:99px;width:26px;height:16px;background:#e6e6e6"></div>
<div style="position:absolute;left:0px;top:98px;width:26px;height:1px;background:#a0a0a0"></div>
<div style="position:absolute;left:26px;top:99px;width:1px;height:16px;background:#a0a0a0"></div>
<div style="position:absolute;left:27px;top:98px;width:824px;height:1px;background:repeating-linear-gradient(to right,#a0a0a0 0 1px,transparent 1px 2px)"></div>
<div style="position:absolute;left:386px;top:99px;width:1px;height:16px;background:repeating-linear-gradient(to bottom,#a0a0a0 0 1px,transparent 1px 2px)"></div>
<div style="position:absolute;left:836px;top:99px;width:1px;height:16px;background:repeating-linear-gradient(to bottom,#a0a0a0 0 1px,transparent 1px 2px)"></div>
<div style="position:absolute;left:29px;top:98px;height:16px;line-height:16px;white-space:nowrap;color:#000;font-size:12px;transform:scaleX(0.9767);transform-origin:0 0">Jobs/Context/Request/recovops.formulation</div>
<div style="position:absolute;left:389px;top:98px;height:16px;line-height:16px;white-space:nowrap;color:#000;font-size:12px;transform:scaleX(0.9237);transform-origin:0 0">revised</div>
<div style="position:absolute;left:0px;top:115px;width:26px;height:16px;background:#e6e6e6"></div>
<div style="position:absolute;left:0px;top:114px;width:26px;height:1px;background:#a0a0a0"></div>
<div style="position:absolute;left:26px;top:115px;width:1px;height:16px;background:#a0a0a0"></div>
<div style="position:absolute;left:27px;top:114px;width:824px;height:1px;background:repeating-linear-gradient(to right,#a0a0a0 0 1px,transparent 1px 2px)"></div>
<div style="position:absolute;left:386px;top:115px;width:1px;height:16px;background:repeating-linear-gradient(to bottom,#a0a0a0 0 1px,transparent 1px 2px)"></div>
<div style="position:absolute;left:836px;top:115px;width:1px;height:16px;background:repeating-linear-gradient(to bottom,#a0a0a0 0 1px,transparent 1px 2px)"></div>
<div style="position:absolute;left:29px;top:114px;height:16px;line-height:16px;white-space:nowrap;color:#000;font-size:12px;transform:scaleX(0.9636);transform-origin:0 0">Jobs/Context/Request/paracutter</div>
<div style="position:absolute;left:389px;top:114px;height:16px;line-height:16px;white-space:nowrap;color:#000;font-size:12px;transform:scaleX(0.8);transform-origin:0 0">1</div>
<div style="position:absolute;left:0px;top:131px;width:26px;height:16px;background:#e6e6e6"></div>
<div style="position:absolute;left:0px;top:130px;width:26px;height:1px;background:#a0a0a0"></div>
<div style="position:absolute;left:26px;top:131px;width:1px;height:16px;background:#a0a0a0"></div>
<div style="position:absolute;left:27px;top:130px;width:824px;height:1px;background:repeating-linear-gradient(to right,#a0a0a0 0 1px,transparent 1px 2px)"></div>
<div style="position:absolute;left:386px;top:131px;width:1px;height:16px;background:repeating-linear-gradient(to bottom,#a0a0a0 0 1px,transparent 1px 2px)"></div>
<div style="position:absolute;left:836px;top:131px;width:1px;height:16px;background:repeating-linear-gradient(to bottom,#a0a0a0 0 1px,transparent 1px 2px)"></div>
<div style="position:absolute;left:29px;top:130px;height:16px;line-height:16px;white-space:nowrap;color:#000;font-size:12px;transform:scaleX(0.9574);transform-origin:0 0">Jobs/Context/Request/extra</div>
<div style="position:absolute;left:389px;top:130px;height:16px;line-height:16px;white-space:nowrap;color:#000;font-size:12px;transform:scaleX(0.95);transform-origin:0 0"></div>
<div style="position:absolute;left:0px;top:147px;width:26px;height:16px;background:#e6e6e6"></div>
<div style="position:absolute;left:0px;top:146px;width:26px;height:1px;background:#a0a0a0"></div>
<div style="position:absolute;left:26px;top:147px;width:1px;height:16px;background:#a0a0a0"></div>
<div style="position:absolute;left:27px;top:146px;width:824px;height:1px;background:repeating-linear-gradient(to right,#a0a0a0 0 1px,transparent 1px 2px)"></div>
<div style="position:absolute;left:386px;top:147px;width:1px;height:16px;background:repeating-linear-gradient(to bottom,#a0a0a0 0 1px,transparent 1px 2px)"></div>
<div style="position:absolute;left:836px;top:147px;width:1px;height:16px;background:repeating-linear-gradient(to bottom,#a0a0a0 0 1px,transparent 1px 2px)"></div>
<div style="position:absolute;left:29px;top:146px;height:16px;line-height:16px;white-space:nowrap;color:#000;font-size:12px;transform:scaleX(0.9787);transform-origin:0 0">Jobs/Context/Request/Solution mode file</div>
<div style="position:absolute;left:389px;top:146px;height:16px;line-height:16px;white-space:nowrap;color:#000;font-size:12px;transform:scaleX(0.9947);transform-origin:0 0">bbToMatcru.pl</div>
<div style="position:absolute;left:0px;top:163px;width:26px;height:16px;background:#e6e6e6"></div>
<div style="position:absolute;left:0px;top:162px;width:26px;height:1px;background:#a0a0a0"></div>
<div style="position:absolute;left:26px;top:163px;width:1px;height:16px;background:#a0a0a0"></div>
<div style="position:absolute;left:27px;top:162px;width:824px;height:1px;background:repeating-linear-gradient(to right,#a0a0a0 0 1px,transparent 1px 2px)"></div>
<div style="position:absolute;left:386px;top:163px;width:1px;height:16px;background:repeating-linear-gradient(to bottom,#a0a0a0 0 1px,transparent 1px 2px)"></div>
<div style="position:absolute;left:836px;top:163px;width:1px;height:16px;background:repeating-linear-gradient(to bottom,#a0a0a0 0 1px,transparent 1px 2px)"></div>
<div style="position:absolute;left:29px;top:162px;height:16px;line-height:16px;white-space:nowrap;color:#000;font-size:12px;transform:scaleX(0.9572);transform-origin:0 0">Jobs/Context/Request/DutyType/Meal Location</div>
<div style="position:absolute;left:389px;top:162px;height:16px;line-height:16px;white-space:nowrap;color:#000;font-size:12px;transform:scaleX(0.9803);transform-origin:0 0">Meal Depot</div>
<div style="position:absolute;left:0px;top:179px;width:26px;height:16px;background:#e6e6e6"></div>
<div style="position:absolute;left:0px;top:178px;width:26px;height:1px;background:#a0a0a0"></div>
<div style="position:absolute;left:26px;top:179px;width:1px;height:16px;background:#a0a0a0"></div>
<div style="position:absolute;left:27px;top:178px;width:824px;height:1px;background:repeating-linear-gradient(to right,#a0a0a0 0 1px,transparent 1px 2px)"></div>
<div style="position:absolute;left:386px;top:179px;width:1px;height:16px;background:repeating-linear-gradient(to bottom,#a0a0a0 0 1px,transparent 1px 2px)"></div>
<div style="position:absolute;left:836px;top:179px;width:1px;height:16px;background:repeating-linear-gradient(to bottom,#a0a0a0 0 1px,transparent 1px 2px)"></div>
<div style="position:absolute;left:29px;top:178px;height:16px;line-height:16px;white-space:nowrap;color:#000;font-size:12px;transform:scaleX(0.9674);transform-origin:0 0">Jobs/Context/Request/DutyType/Meal Abbreviation</div>
<div style="position:absolute;left:389px;top:178px;height:16px;line-height:16px;white-space:nowrap;color:#000;font-size:12px;transform:scaleX(0.9531);transform-origin:0 0">meald</div>
<div style="position:absolute;left:0px;top:195px;width:26px;height:16px;background:#e6e6e6"></div>
<div style="position:absolute;left:0px;top:194px;width:26px;height:1px;background:#a0a0a0"></div>
<div style="position:absolute;left:26px;top:195px;width:1px;height:16px;background:#a0a0a0"></div>
<div style="position:absolute;left:27px;top:194px;width:824px;height:1px;background:repeating-linear-gradient(to right,#a0a0a0 0 1px,transparent 1px 2px)"></div>
<div style="position:absolute;left:386px;top:195px;width:1px;height:16px;background:repeating-linear-gradient(to bottom,#a0a0a0 0 1px,transparent 1px 2px)"></div>
<div style="position:absolute;left:836px;top:195px;width:1px;height:16px;background:repeating-linear-gradient(to bottom,#a0a0a0 0 1px,transparent 1px 2px)"></div>
<div style="position:absolute;left:29px;top:194px;height:16px;line-height:16px;white-space:nowrap;color:#000;font-size:12px;transform:scaleX(0.9553);transform-origin:0 0">Jobs/Context/Request/DutyType/Traffic Second SignOn</div>
<div style="position:absolute;left:389px;top:194px;height:16px;line-height:16px;white-space:nowrap;color:#000;font-size:12px;transform:scaleX(0.8717);transform-origin:0 0">PT00H30M</div>
<div style="position:absolute;left:0px;top:211px;width:26px;height:16px;background:#e6e6e6"></div>
<div style="position:absolute;left:0px;top:210px;width:26px;height:1px;background:#a0a0a0"></div>
<div style="position:absolute;left:26px;top:211px;width:1px;height:16px;background:#a0a0a0"></div>
<div style="position:absolute;left:27px;top:210px;width:824px;height:1px;background:repeating-linear-gradient(to right,#a0a0a0 0 1px,transparent 1px 2px)"></div>
<div style="position:absolute;left:386px;top:211px;width:1px;height:16px;background:repeating-linear-gradient(to bottom,#a0a0a0 0 1px,transparent 1px 2px)"></div>
<div style="position:absolute;left:836px;top:211px;width:1px;height:16px;background:repeating-linear-gradient(to bottom,#a0a0a0 0 1px,transparent 1px 2px)"></div>
<div style="position:absolute;left:29px;top:210px;height:16px;line-height:16px;white-space:nowrap;color:#000;font-size:12px;transform:scaleX(0.9548);transform-origin:0 0">Jobs/Context/Request/ITF/Input Source</div>
<div style="position:absolute;left:389px;top:210px;height:16px;line-height:16px;white-space:nowrap;color:#000;font-size:12px;transform:scaleX(0.9448);transform-origin:0 0">Prospector</div>
<div style="position:absolute;left:0px;top:227px;width:26px;height:16px;background:#e6e6e6"></div>
<div style="position:absolute;left:0px;top:226px;width:26px;height:1px;background:#a0a0a0"></div>
<div style="position:absolute;left:26px;top:227px;width:1px;height:16px;background:#a0a0a0"></div>
<div style="position:absolute;left:27px;top:226px;width:824px;height:1px;background:repeating-linear-gradient(to right,#a0a0a0 0 1px,transparent 1px 2px)"></div>
<div style="position:absolute;left:386px;top:227px;width:1px;height:16px;background:repeating-linear-gradient(to bottom,#a0a0a0 0 1px,transparent 1px 2px)"></div>
<div style="position:absolute;left:836px;top:227px;width:1px;height:16px;background:repeating-linear-gradient(to bottom,#a0a0a0 0 1px,transparent 1px 2px)"></div>
<div style="position:absolute;left:29px;top:226px;height:16px;line-height:16px;white-space:nowrap;color:#000;font-size:12px;transform:scaleX(0.9326);transform-origin:0 0">Jobs/Context/Request/ITF/Vehicle Class</div>
<div style="position:absolute;left:389px;top:226px;height:16px;line-height:16px;white-space:nowrap;color:#000;font-size:12px;transform:scaleX(0.95);transform-origin:0 0"></div>
<div style="position:absolute;left:0px;top:243px;width:26px;height:16px;background:#e6e6e6"></div>
<div style="position:absolute;left:0px;top:242px;width:26px;height:1px;background:#a0a0a0"></div>
<div style="position:absolute;left:26px;top:243px;width:1px;height:16px;background:#a0a0a0"></div>
<div style="position:absolute;left:27px;top:242px;width:824px;height:1px;background:repeating-linear-gradient(to right,#a0a0a0 0 1px,transparent 1px 2px)"></div>
<div style="position:absolute;left:386px;top:243px;width:1px;height:16px;background:repeating-linear-gradient(to bottom,#a0a0a0 0 1px,transparent 1px 2px)"></div>
<div style="position:absolute;left:836px;top:243px;width:1px;height:16px;background:repeating-linear-gradient(to bottom,#a0a0a0 0 1px,transparent 1px 2px)"></div>
<div style="position:absolute;left:29px;top:242px;height:16px;line-height:16px;white-space:nowrap;color:#000;font-size:12px;transform:scaleX(0.9571);transform-origin:0 0">Jobs/Context/Request/LinkInfo/VClass/idealCapacity</div>
<div style="position:absolute;left:389px;top:242px;height:16px;line-height:16px;white-space:nowrap;color:#000;font-size:12px;transform:scaleX(0.9231);transform-origin:0 0">10</div>
<div style="position:absolute;left:0px;top:259px;width:26px;height:16px;background:#e6e6e6"></div>
<div style="position:absolute;left:0px;top:258px;width:26px;height:1px;background:#a0a0a0"></div>
<div style="position:absolute;left:26px;top:259px;width:1px;height:16px;background:#a0a0a0"></div>
<div style="position:absolute;left:27px;top:258px;width:824px;height:1px;background:repeating-linear-gradient(to right,#a0a0a0 0 1px,transparent 1px 2px)"></div>
<div style="position:absolute;left:386px;top:259px;width:1px;height:16px;background:repeating-linear-gradient(to bottom,#a0a0a0 0 1px,transparent 1px 2px)"></div>
<div style="position:absolute;left:836px;top:259px;width:1px;height:16px;background:repeating-linear-gradient(to bottom,#a0a0a0 0 1px,transparent 1px 2px)"></div>
<div style="position:absolute;left:29px;top:258px;height:16px;line-height:16px;white-space:nowrap;color:#000;font-size:12px;transform:scaleX(0.9453);transform-origin:0 0">Jobs/Context/Request/LinkInfo/VClass/maxCapacity</div>
<div style="position:absolute;left:389px;top:258px;height:16px;line-height:16px;white-space:nowrap;color:#000;font-size:12px;transform:scaleX(1.0);transform-origin:0 0">0</div>
<div style="position:absolute;left:0px;top:275px;width:26px;height:16px;background:#e6e6e6"></div>
<div style="position:absolute;left:0px;top:274px;width:26px;height:1px;background:#a0a0a0"></div>
<div style="position:absolute;left:26px;top:275px;width:1px;height:16px;background:#a0a0a0"></div>
<div style="position:absolute;left:27px;top:274px;width:824px;height:1px;background:repeating-linear-gradient(to right,#a0a0a0 0 1px,transparent 1px 2px)"></div>
<div style="position:absolute;left:386px;top:275px;width:1px;height:16px;background:repeating-linear-gradient(to bottom,#a0a0a0 0 1px,transparent 1px 2px)"></div>
<div style="position:absolute;left:836px;top:275px;width:1px;height:16px;background:repeating-linear-gradient(to bottom,#a0a0a0 0 1px,transparent 1px 2px)"></div>
<div style="position:absolute;left:29px;top:274px;height:16px;line-height:16px;white-space:nowrap;color:#000;font-size:12px;transform:scaleX(0.9551);transform-origin:0 0">Jobs/Context/Request/LinkInfo/VClass/minCapacity</div>
<div style="position:absolute;left:389px;top:274px;height:16px;line-height:16px;white-space:nowrap;color:#000;font-size:12px;transform:scaleX(1.0);transform-origin:0 0">0</div>
<div style="position:absolute;left:0px;top:291px;width:26px;height:16px;background:#e6e6e6"></div>
<div style="position:absolute;left:0px;top:290px;width:26px;height:1px;background:#a0a0a0"></div>
<div style="position:absolute;left:26px;top:291px;width:1px;height:16px;background:#a0a0a0"></div>
<div style="position:absolute;left:27px;top:290px;width:824px;height:1px;background:repeating-linear-gradient(to right,#a0a0a0 0 1px,transparent 1px 2px)"></div>
<div style="position:absolute;left:386px;top:291px;width:1px;height:16px;background:repeating-linear-gradient(to bottom,#a0a0a0 0 1px,transparent 1px 2px)"></div>
<div style="position:absolute;left:836px;top:291px;width:1px;height:16px;background:repeating-linear-gradient(to bottom,#a0a0a0 0 1px,transparent 1px 2px)"></div>
<div style="position:absolute;left:29px;top:290px;height:16px;line-height:16px;white-space:nowrap;color:#000;font-size:12px;transform:scaleX(0.9459);transform-origin:0 0">Jobs/Context/Request/LinkInfo/VClass/costPerKm</div>
<div style="position:absolute;left:389px;top:290px;height:16px;line-height:16px;white-space:nowrap;color:#000;font-size:12px;transform:scaleX(0.8);transform-origin:0 0">1</div>
<div style="position:absolute;left:0px;top:307px;width:26px;height:16px;background:#e6e6e6"></div>
<div style="position:absolute;left:0px;top:306px;width:26px;height:1px;background:#a0a0a0"></div>
<div style="position:absolute;left:26px;top:307px;width:1px;height:16px;background:#a0a0a0"></div>
<div style="position:absolute;left:27px;top:306px;width:824px;height:1px;background:repeating-linear-gradient(to right,#a0a0a0 0 1px,transparent 1px 2px)"></div>
<div style="position:absolute;left:386px;top:307px;width:1px;height:16px;background:repeating-linear-gradient(to bottom,#a0a0a0 0 1px,transparent 1px 2px)"></div>
<div style="position:absolute;left:836px;top:307px;width:1px;height:16px;background:repeating-linear-gradient(to bottom,#a0a0a0 0 1px,transparent 1px 2px)"></div>
<div style="position:absolute;left:29px;top:306px;height:16px;line-height:16px;white-space:nowrap;color:#000;font-size:12px;transform:scaleX(0.95);transform-origin:0 0">Jobs/Context/Request/LinkInfo/VClass/averageSpeed</div>
<div style="position:absolute;left:389px;top:306px;height:16px;line-height:16px;white-space:nowrap;color:#000;font-size:12px;transform:scaleX(0.8);transform-origin:0 0">1</div>
<div style="position:absolute;left:0px;top:323px;width:26px;height:16px;background:#e6e6e6"></div>
<div style="position:absolute;left:0px;top:322px;width:26px;height:1px;background:#a0a0a0"></div>
<div style="position:absolute;left:26px;top:323px;width:1px;height:16px;background:#a0a0a0"></div>
<div style="position:absolute;left:27px;top:322px;width:824px;height:1px;background:repeating-linear-gradient(to right,#a0a0a0 0 1px,transparent 1px 2px)"></div>
<div style="position:absolute;left:386px;top:323px;width:1px;height:16px;background:repeating-linear-gradient(to bottom,#a0a0a0 0 1px,transparent 1px 2px)"></div>
<div style="position:absolute;left:836px;top:323px;width:1px;height:16px;background:repeating-linear-gradient(to bottom,#a0a0a0 0 1px,transparent 1px 2px)"></div>
<div style="position:absolute;left:29px;top:322px;height:16px;line-height:16px;white-space:nowrap;color:#000;font-size:12px;transform:scaleX(0.953);transform-origin:0 0">Jobs/Context/Request/LinkInfo/VClass/costPerVehicle</div>
<div style="position:absolute;left:389px;top:322px;height:16px;line-height:16px;white-space:nowrap;color:#000;font-size:12px;transform:scaleX(0.95);transform-origin:0 0"></div>
<div style="position:absolute;left:0px;top:339px;width:26px;height:16px;background:#e6e6e6"></div>
<div style="position:absolute;left:0px;top:338px;width:26px;height:1px;background:#a0a0a0"></div>
<div style="position:absolute;left:26px;top:339px;width:1px;height:16px;background:#a0a0a0"></div>
<div style="position:absolute;left:27px;top:338px;width:824px;height:1px;background:repeating-linear-gradient(to right,#a0a0a0 0 1px,transparent 1px 2px)"></div>
<div style="position:absolute;left:386px;top:339px;width:1px;height:16px;background:repeating-linear-gradient(to bottom,#a0a0a0 0 1px,transparent 1px 2px)"></div>
<div style="position:absolute;left:836px;top:339px;width:1px;height:16px;background:repeating-linear-gradient(to bottom,#a0a0a0 0 1px,transparent 1px 2px)"></div>
<div style="position:absolute;left:29px;top:338px;height:16px;line-height:16px;white-space:nowrap;color:#000;font-size:12px;transform:scaleX(0.9548);transform-origin:0 0">Jobs/Context/Request/LinkInfo/VClass/maxRunningTime</div>
<div style="position:absolute;left:389px;top:338px;height:16px;line-height:16px;white-space:nowrap;color:#000;font-size:12px;transform:scaleX(0.95);transform-origin:0 0"></div>
<div style="position:absolute;left:0px;top:355px;width:26px;height:16px;background:#e6e6e6"></div>
<div style="position:absolute;left:0px;top:354px;width:26px;height:1px;background:#a0a0a0"></div>
<div style="position:absolute;left:26px;top:355px;width:1px;height:16px;background:#a0a0a0"></div>
<div style="position:absolute;left:27px;top:354px;width:824px;height:1px;background:repeating-linear-gradient(to right,#a0a0a0 0 1px,transparent 1px 2px)"></div>
<div style="position:absolute;left:386px;top:355px;width:1px;height:16px;background:repeating-linear-gradient(to bottom,#a0a0a0 0 1px,transparent 1px 2px)"></div>
<div style="position:absolute;left:836px;top:355px;width:1px;height:16px;background:repeating-linear-gradient(to bottom,#a0a0a0 0 1px,transparent 1px 2px)"></div>
<div style="position:absolute;left:29px;top:354px;height:16px;line-height:16px;white-space:nowrap;color:#000;font-size:12px;transform:scaleX(0.9564);transform-origin:0 0">Jobs/Context/Request/LinkInfo/VClass/refuelTime</div>
<div style="position:absolute;left:389px;top:354px;height:16px;line-height:16px;white-space:nowrap;color:#000;font-size:12px;transform:scaleX(0.95);transform-origin:0 0"></div>
<div style="position:absolute;left:0px;top:371px;width:26px;height:16px;background:#e6e6e6"></div>
<div style="position:absolute;left:0px;top:370px;width:26px;height:1px;background:#a0a0a0"></div>
<div style="position:absolute;left:26px;top:371px;width:1px;height:16px;background:#a0a0a0"></div>
<div style="position:absolute;left:27px;top:370px;width:824px;height:1px;background:repeating-linear-gradient(to right,#a0a0a0 0 1px,transparent 1px 2px)"></div>
<div style="position:absolute;left:386px;top:371px;width:1px;height:16px;background:repeating-linear-gradient(to bottom,#a0a0a0 0 1px,transparent 1px 2px)"></div>
<div style="position:absolute;left:836px;top:371px;width:1px;height:16px;background:repeating-linear-gradient(to bottom,#a0a0a0 0 1px,transparent 1px 2px)"></div>
<div style="position:absolute;left:29px;top:370px;height:16px;line-height:16px;white-space:nowrap;color:#000;font-size:12px;transform:scaleX(0.9238);transform-origin:0 0">Jobs/Context/Request/ROF/MATRICSHOME</div>
<div style="position:absolute;left:389px;top:370px;height:16px;line-height:16px;white-space:nowrap;color:#000;font-size:12px;transform:scaleX(0.95);transform-origin:0 0"></div>
<div style="position:absolute;left:0px;top:387px;width:26px;height:16px;background:#e6e6e6"></div>
<div style="position:absolute;left:0px;top:386px;width:26px;height:1px;background:#a0a0a0"></div>
<div style="position:absolute;left:26px;top:387px;width:1px;height:16px;background:#a0a0a0"></div>
<div style="position:absolute;left:27px;top:386px;width:824px;height:1px;background:repeating-linear-gradient(to right,#a0a0a0 0 1px,transparent 1px 2px)"></div>
<div style="position:absolute;left:386px;top:387px;width:1px;height:16px;background:repeating-linear-gradient(to bottom,#a0a0a0 0 1px,transparent 1px 2px)"></div>
<div style="position:absolute;left:836px;top:387px;width:1px;height:16px;background:repeating-linear-gradient(to bottom,#a0a0a0 0 1px,transparent 1px 2px)"></div>
<div style="position:absolute;left:29px;top:386px;height:16px;line-height:16px;white-space:nowrap;color:#000;font-size:12px;transform:scaleX(0.9608);transform-origin:0 0">Jobs/Context/Request/ROF/matcru-ident</div>
<div style="position:absolute;left:389px;top:386px;height:16px;line-height:16px;white-space:nowrap;color:#000;font-size:12px;transform:scaleX(0.95);transform-origin:0 0"></div>
<div style="position:absolute;left:0px;top:403px;width:26px;height:16px;background:#e6e6e6"></div>
<div style="position:absolute;left:0px;top:402px;width:26px;height:1px;background:#a0a0a0"></div>
<div style="position:absolute;left:26px;top:403px;width:1px;height:16px;background:#a0a0a0"></div>
<div style="position:absolute;left:27px;top:402px;width:824px;height:1px;background:repeating-linear-gradient(to right,#a0a0a0 0 1px,transparent 1px 2px)"></div>
<div style="position:absolute;left:386px;top:403px;width:1px;height:16px;background:repeating-linear-gradient(to bottom,#a0a0a0 0 1px,transparent 1px 2px)"></div>
<div style="position:absolute;left:836px;top:403px;width:1px;height:16px;background:repeating-linear-gradient(to bottom,#a0a0a0 0 1px,transparent 1px 2px)"></div>
<div style="position:absolute;left:29px;top:402px;height:16px;line-height:16px;white-space:nowrap;color:#000;font-size:12px;transform:scaleX(0.9394);transform-origin:0 0">Jobs/Import/Capacity Type</div>
<div style="position:absolute;left:389px;top:402px;height:16px;line-height:16px;white-space:nowrap;color:#000;font-size:12px;transform:scaleX(1.0);transform-origin:0 0">0</div>
<div style="position:absolute;left:0px;top:419px;width:26px;height:16px;background:#e6e6e6"></div>
<div style="position:absolute;left:0px;top:418px;width:26px;height:1px;background:#a0a0a0"></div>
<div style="position:absolute;left:26px;top:419px;width:1px;height:16px;background:#a0a0a0"></div>
<div style="position:absolute;left:27px;top:418px;width:824px;height:1px;background:repeating-linear-gradient(to right,#a0a0a0 0 1px,transparent 1px 2px)"></div>
<div style="position:absolute;left:386px;top:419px;width:1px;height:16px;background:repeating-linear-gradient(to bottom,#a0a0a0 0 1px,transparent 1px 2px)"></div>
<div style="position:absolute;left:836px;top:419px;width:1px;height:16px;background:repeating-linear-gradient(to bottom,#a0a0a0 0 1px,transparent 1px 2px)"></div>
<div style="position:absolute;left:29px;top:418px;height:16px;line-height:16px;white-space:nowrap;color:#000;font-size:12px;transform:scaleX(0.9476);transform-origin:0 0">Jobs/Import/Schedule Type</div>
<div style="position:absolute;left:389px;top:418px;height:16px;line-height:16px;white-space:nowrap;color:#000;font-size:12px;transform:scaleX(0.95);transform-origin:0 0"></div>
<div style="position:absolute;left:0px;top:435px;width:26px;height:16px;background:#e6e6e6"></div>
<div style="position:absolute;left:0px;top:434px;width:26px;height:1px;background:#a0a0a0"></div>
<div style="position:absolute;left:26px;top:435px;width:1px;height:16px;background:#a0a0a0"></div>
<div style="position:absolute;left:27px;top:434px;width:824px;height:1px;background:repeating-linear-gradient(to right,#a0a0a0 0 1px,transparent 1px 2px)"></div>
<div style="position:absolute;left:386px;top:435px;width:1px;height:16px;background:repeating-linear-gradient(to bottom,#a0a0a0 0 1px,transparent 1px 2px)"></div>
<div style="position:absolute;left:836px;top:435px;width:1px;height:16px;background:repeating-linear-gradient(to bottom,#a0a0a0 0 1px,transparent 1px 2px)"></div>
<div style="position:absolute;left:29px;top:434px;height:16px;line-height:16px;white-space:nowrap;color:#000;font-size:12px;transform:scaleX(0.9824);transform-origin:0 0">Jobs/Import/Run suffix</div>
<div style="position:absolute;left:389px;top:434px;height:16px;line-height:16px;white-space:nowrap;color:#000;font-size:12px;transform:scaleX(0.875);transform-origin:0 0">R</div>
<div style="position:absolute;left:0px;top:451px;width:26px;height:16px;background:#e6e6e6"></div>
<div style="position:absolute;left:0px;top:450px;width:26px;height:1px;background:#a0a0a0"></div>
<div style="position:absolute;left:26px;top:451px;width:1px;height:16px;background:#a0a0a0"></div>
<div style="position:absolute;left:27px;top:450px;width:824px;height:1px;background:repeating-linear-gradient(to right,#a0a0a0 0 1px,transparent 1px 2px)"></div>
<div style="position:absolute;left:386px;top:451px;width:1px;height:16px;background:repeating-linear-gradient(to bottom,#a0a0a0 0 1px,transparent 1px 2px)"></div>
<div style="position:absolute;left:836px;top:451px;width:1px;height:16px;background:repeating-linear-gradient(to bottom,#a0a0a0 0 1px,transparent 1px 2px)"></div>
<div style="position:absolute;left:29px;top:450px;height:16px;line-height:16px;white-space:nowrap;color:#000;font-size:12px;transform:scaleX(0.9646);transform-origin:0 0">Jobs/Import/Driver Field</div>
<div style="position:absolute;left:389px;top:450px;height:16px;line-height:16px;white-space:nowrap;color:#000;font-size:12px;transform:scaleX(0.9224);transform-origin:0 0">UserLong1</div>
<div style="position:absolute;left:0px;top:467px;width:26px;height:19px;background:#e6e6e6"></div>
<div style="position:absolute;left:0px;top:466px;width:26px;height:1px;background:#a0a0a0"></div>
<div style="position:absolute;left:26px;top:467px;width:1px;height:19px;background:#a0a0a0"></div>
<div style="position:absolute;left:27px;top:466px;width:824px;height:1px;background:repeating-linear-gradient(to right,#a0a0a0 0 1px,transparent 1px 2px)"></div>
<div style="position:absolute;left:386px;top:467px;width:1px;height:19px;background:repeating-linear-gradient(to bottom,#a0a0a0 0 1px,transparent 1px 2px)"></div>
<div style="position:absolute;left:836px;top:467px;width:1px;height:19px;background:repeating-linear-gradient(to bottom,#a0a0a0 0 1px,transparent 1px 2px)"></div>
<div style="position:absolute;left:29px;top:466px;height:16px;line-height:16px;white-space:nowrap;color:#000;font-size:12px;transform:scaleX(0.9336);transform-origin:0 0">Plans/Refresh Period</div>
<div style="position:absolute;left:389px;top:466px;height:16px;line-height:16px;white-space:nowrap;color:#000;font-size:12px;transform:scaleX(1.0);transform-origin:0 0">0</div>
<div style="position:absolute;left:838px;top:468px;width:14px;height:16px;background:#eeeeee;border:1px solid #a8a8a8;border-right:none;border-radius:4px 0 0 4px;box-sizing:border-box"></div>
<div style="position:absolute;left:0px;top:486px;width:26px;height:16px;background:#e6e6e6"></div>
<div style="position:absolute;left:0px;top:485px;width:26px;height:1px;background:#a0a0a0"></div>
<div style="position:absolute;left:26px;top:486px;width:1px;height:16px;background:#a0a0a0"></div>
<div style="position:absolute;left:27px;top:485px;width:824px;height:1px;background:repeating-linear-gradient(to right,#a0a0a0 0 1px,transparent 1px 2px)"></div>
<div style="position:absolute;left:386px;top:486px;width:1px;height:16px;background:repeating-linear-gradient(to bottom,#a0a0a0 0 1px,transparent 1px 2px)"></div>
<div style="position:absolute;left:836px;top:486px;width:1px;height:16px;background:repeating-linear-gradient(to bottom,#a0a0a0 0 1px,transparent 1px 2px)"></div>
<div style="position:absolute;left:29px;top:485px;height:16px;line-height:16px;white-space:nowrap;color:#000;font-size:12px;transform:scaleX(0.9271);transform-origin:0 0">Plans/Default Page Size</div>
<div style="position:absolute;left:389px;top:485px;height:16px;line-height:16px;white-space:nowrap;color:#000;font-size:12px;transform:scaleX(0.89);transform-origin:0 0">500</div>
<div style="position:absolute;left:0px;top:502px;width:26px;height:16px;background:#e6e6e6"></div>
<div style="position:absolute;left:0px;top:501px;width:26px;height:1px;background:#a0a0a0"></div>
<div style="position:absolute;left:26px;top:502px;width:1px;height:16px;background:#a0a0a0"></div>
<div style="position:absolute;left:27px;top:501px;width:824px;height:1px;background:repeating-linear-gradient(to right,#a0a0a0 0 1px,transparent 1px 2px)"></div>
<div style="position:absolute;left:386px;top:502px;width:1px;height:16px;background:repeating-linear-gradient(to bottom,#a0a0a0 0 1px,transparent 1px 2px)"></div>
<div style="position:absolute;left:836px;top:502px;width:1px;height:16px;background:repeating-linear-gradient(to bottom,#a0a0a0 0 1px,transparent 1px 2px)"></div>
<div style="position:absolute;left:29px;top:501px;height:16px;line-height:16px;white-space:nowrap;color:#000;font-size:12px;transform:scaleX(0.9285);transform-origin:0 0">Rules/Default Page Size</div>
<div style="position:absolute;left:389px;top:501px;height:16px;line-height:16px;white-space:nowrap;color:#000;font-size:12px;transform:scaleX(0.89);transform-origin:0 0">500</div>
<div style="position:absolute;left:0px;top:518px;width:26px;height:26px;background:#e6e6e6"></div>
<div style="position:absolute;left:0px;top:517px;width:26px;height:1px;background:#a0a0a0"></div>
<div style="position:absolute;left:26px;top:518px;width:1px;height:26px;background:#a0a0a0"></div>
<div style="position:absolute;left:27px;top:517px;width:824px;height:1px;background:repeating-linear-gradient(to right,#a0a0a0 0 1px,transparent 1px 2px)"></div>
<div style="position:absolute;left:386px;top:518px;width:1px;height:26px;background:repeating-linear-gradient(to bottom,#a0a0a0 0 1px,transparent 1px 2px)"></div>
<div style="position:absolute;left:836px;top:518px;width:1px;height:26px;background:repeating-linear-gradient(to bottom,#a0a0a0 0 1px,transparent 1px 2px)"></div>
<div style="position:absolute;left:29px;top:517px;height:16px;line-height:16px;white-space:nowrap;color:#000;font-size:12px;transform:scaleX(0.9659);transform-origin:0 0">Rules/Shifts and Blocks/First Optimization Objective</div>
<div style="position:absolute;left:389px;top:517px;height:16px;line-height:16px;white-space:nowrap;color:#000;font-size:12px;transform:scaleX(0.9517);transform-origin:0 0">Time worked, Driver shifts, Shifts plus vehicles, Combined cost, Time padded, Match</div>
<div style="position:absolute;left:389px;top:530px;height:16px;line-height:16px;white-space:nowrap;color:#000;font-size:12px;transform:scaleX(0.98);transform-origin:0 0">Prior Solution</div>
</div>
<div style="position:absolute;left:779px;top:667px;width:851px;height:1px;background:#a0a0a0"></div>
<div style="position:absolute;left:1630px;top:101px;width:17px;height:566px;background:#dedede"></div>
<div style="position:absolute;left:1630px;top:101px;width:17px;height:17px;background:#fff;border:1px solid #c8c8c8;box-sizing:border-box"></div>
<div style="position:absolute;left:1633px;top:107px;width:0px;height:0px;border-left:5px solid transparent;border-right:5px solid transparent;border-bottom:5px solid #606060"></div>
<div style="position:absolute;left:1630px;top:118px;width:17px;height:366px;background:#fdfdfd;border:1px solid #b0b0b0;border-width:2px 1px 2px 1px;box-sizing:border-box"></div>
<div style="position:absolute;left:1630px;top:650px;width:17px;height:17px;background:#fff;border:1px solid #c8c8c8;box-sizing:border-box"></div>
<div style="position:absolute;left:1633px;top:657px;width:0px;height:0px;border-left:5px solid transparent;border-right:5px solid transparent;border-top:5px solid #606060"></div>
<div style="position:absolute;left:778px;top:667px;width:852px;height:17px;background:#dedede"></div>
<div style="position:absolute;left:778px;top:667px;width:17px;height:17px;background:#fff;border:1px solid #c8c8c8;box-sizing:border-box"></div>
<div style="position:absolute;left:784px;top:671px;width:0px;height:0px;border-top:5px solid transparent;border-bottom:5px solid transparent;border-right:5px solid #606060"></div>
<div style="position:absolute;left:795px;top:667px;width:614px;height:17px;background:#fdfdfd;border:1px solid #b0b0b0;box-sizing:border-box"></div>
<div style="position:absolute;left:1613px;top:667px;width:17px;height:17px;background:#fff;border:1px solid #c8c8c8;box-sizing:border-box"></div>
<div style="position:absolute;left:1619px;top:671px;width:0px;height:0px;border-top:5px solid transparent;border-bottom:5px solid transparent;border-left:5px solid #606060"></div>
<div style="position:absolute;left:1630px;top:667px;width:17px;height:17px;background:#dedede"></div>
<div style="position:absolute;left:777px;top:684px;width:871px;height:4px;background:#efefef"></div>
<div style="position:absolute;left:778px;top:688px;width:869px;height:94px;background:#fff;border-left:2px solid #6a6a6a;border-top:2px solid #6a6a6a;border-right:1px solid #e0e0e0;border-bottom:1px solid #e0e0e0;box-sizing:border-box"></div>
<svg style="position:absolute;left:781px;top:691px;" width="15" height="15" viewBox="0 0 15 15"><circle cx="7.5" cy="7.5" r="7" fill="#1464e8"/><rect x="6.5" y="6" width="2.2" height="5.5" fill="#fff"/><circle cx="7.6" cy="4" r="1.2" fill="#fff"/></svg>
<div style="position:absolute;left:801px;top:690px;height:16px;line-height:16px;white-space:nowrap;color:#000;font-weight:bold;font-size:10.9px;text-decoration:underline">ParaCutter/Jobs/Refresh Period </div>
<div style="position:absolute;left:798px;top:716px;height:16px;line-height:16px;white-space:nowrap;color:#000;font-size:11.6px">Set up refreshing period</div>
<div style="position:absolute;left:0px;top:789px;width:1655px;height:21px;background:#f0f0f0"></div>
<div style="position:absolute;left:6px;top:792px;height:16px;line-height:16px;white-space:nowrap;color:#333;font-size:11px">Ready</div>
<div style="position:absolute;left:1416px;top:792px;height:16px;line-height:16px;white-space:nowrap;color:#a0a0a0;font-size:11px">New Message</div>
<div style="position:absolute;left:1493px;top:792px;height:16px;line-height:16px;white-space:nowrap;color:#a0a0a0;font-size:11px">MODIFIED</div>
<div style="position:absolute;left:1552px;top:792px;height:16px;line-height:16px;white-space:nowrap;color:#a0a0a0;font-size:11px">CAP</div>
<div style="position:absolute;left:1578px;top:792px;height:16px;line-height:16px;white-space:nowrap;color:#333;font-size:11px">NUM</div>
<div style="position:absolute;left:1610px;top:792px;height:16px;line-height:16px;white-space:nowrap;color:#a0a0a0;font-size:11px">SCRL</div>
<svg style="position:absolute;left:1641px;top:795px;" width="12" height="12" viewBox="0 0 12 12" shape-rendering="crispEdges"><rect x="8" y="2" width="2" height="2" fill="#aaa"/><rect x="5" y="5" width="2" height="2" fill="#aaa"/><rect x="8" y="5" width="2" height="2" fill="#aaa"/><rect x="2" y="8" width="2" height="2" fill="#aaa"/><rect x="5" y="8" width="2" height="2" fill="#aaa"/><rect x="8" y="8" width="2" height="2" fill="#aaa"/></svg>
</body></html>
